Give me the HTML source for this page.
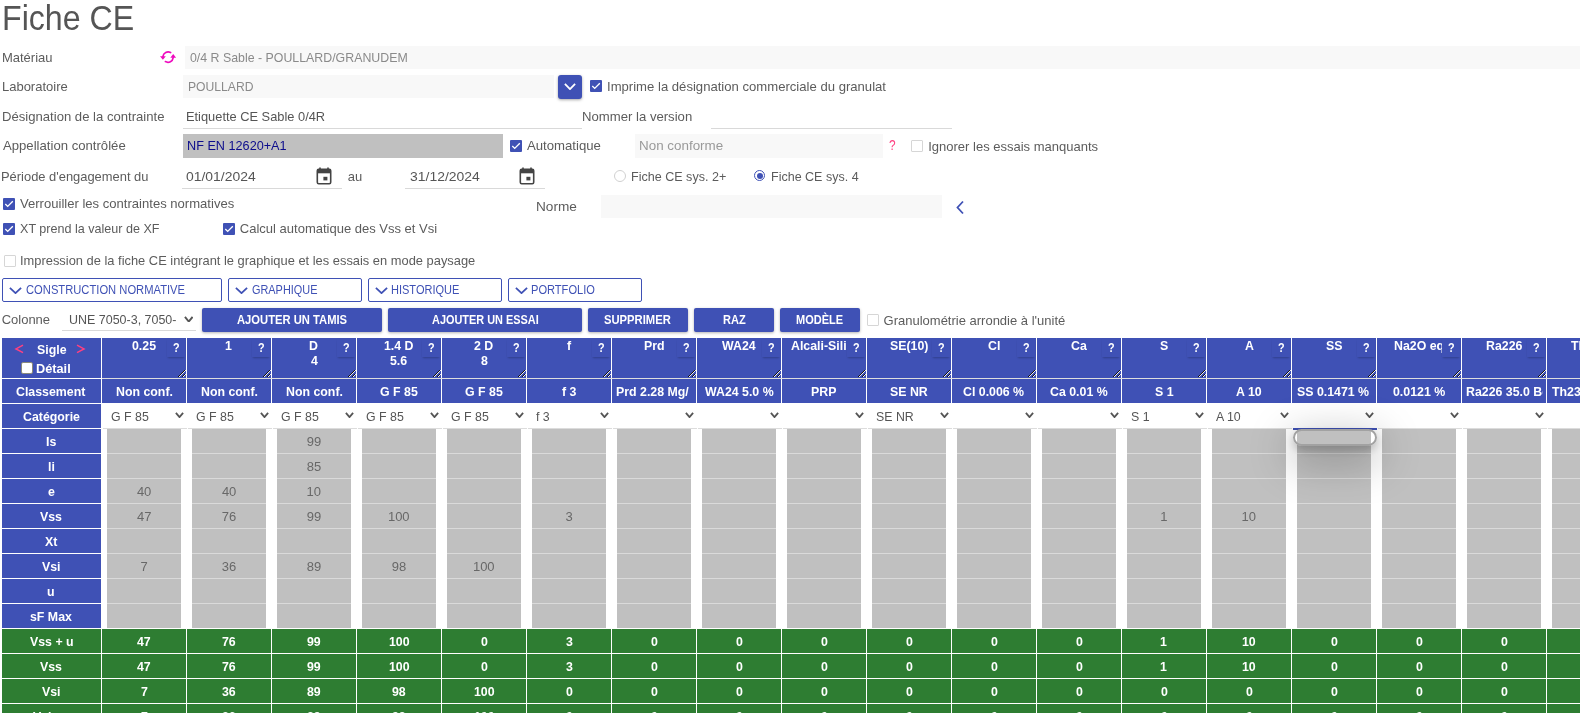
<!DOCTYPE html>
<html><head><meta charset="utf-8"><style>
html,body{margin:0;padding:0;width:1580px;height:713px;overflow:hidden;background:#fff}
body{position:relative;font-family:"Liberation Sans",sans-serif}
#w{position:absolute;left:0;top:0;width:1580px;height:713px;overflow:hidden;will-change:transform}
.t{position:absolute;white-space:nowrap}
.r{position:absolute;box-sizing:content-box}
</style></head><body><div id="w">
<div class="t" style="left:1.63px;top:1.00px;font-size:34.5px;line-height:34.5px;color:#555;transform:scaleX(0.9320);transform-origin:0 0;">Fiche CE</div>
<div class="t" style="left:1.96px;top:51.00px;font-size:13px;line-height:13px;color:#5c5c5c;">Matériau</div>
<svg class="r" style="left:156px;top:46px" width="24" height="22" viewBox="0 0 24 22"><g fill="none" stroke="#ee0abe" stroke-width="1.7" stroke-linecap="round"><path d="M14.6 6.6 A5.3 5.3 0 0 0 6.9 10.6"/><path d="M9.4 15.6 A5.3 5.3 0 0 0 17.2 11.6"/></g><g fill="#ee0abe"><path d="M4.0 10.3 L9.8 10.3 L6.9 13.8 Z"/><path d="M14.3 11.7 L20.1 11.7 L17.2 8.1 Z"/></g></svg>
<div class="r" style="left:185px;top:46px;width:1395px;height:23px;background:#f8f8f8"></div>
<div class="t" style="left:189.91px;top:51.00px;font-size:13px;line-height:13px;color:#8a8a8a;transform:scaleX(0.9506);transform-origin:0 0;">0/4 R Sable - POULLARD/GRANUDEM</div>
<div class="t" style="left:1.96px;top:80.00px;font-size:13px;line-height:13px;color:#5c5c5c;">Laboratoire</div>
<div class="r" style="left:183px;top:75px;width:371px;height:23px;background:#f8f8f8"></div>
<div class="t" style="left:187.53px;top:80.00px;font-size:13px;line-height:13px;color:#8a8a8a;transform:scaleX(0.9351);transform-origin:0 0;">POULLARD</div>
<div class="r" style="left:558px;top:75px;width:24px;height:24px;background:#3f51b5;border-radius:3px;box-shadow:0 1px 3px rgba(0,0,0,.35)"></div>
<svg class="r" style="left:564px;top:83px" width="12" height="7" viewBox="0 0 12 7"><path d="M0.9 0.9 L6.0 6.1 L11.1 0.9" fill="none" stroke="#fff" stroke-width="1.8"/></svg>
<div class="r" style="left:590px;top:80px;width:12px;height:12px;background:#3f51b5;border-radius:1px"><svg width="12" height="12" viewBox="0 0 12 12" style="position:absolute;left:0;top:0"><path d="M2.3 6.1 L4.7 8.4 L9.8 3.3" fill="none" stroke="#fff" stroke-width="1.35"/></svg></div>
<div class="t" style="left:606.62px;top:80.00px;font-size:13px;line-height:13px;color:#5c5c5c;transform:scaleX(1.0081);transform-origin:0 0;">Imprime la désignation commerciale du granulat</div>
<div class="t" style="left:2.15px;top:110.00px;font-size:13px;line-height:13px;color:#5c5c5c;transform:scaleX(1.0081);transform-origin:0 0;">Désignation de la contrainte</div>
<div class="r" style="left:183px;top:128px;width:399px;height:1px;background:#d9d9d9"></div>
<div class="t" style="left:186.47px;top:109.50px;font-size:13px;line-height:13px;color:#555;transform:scaleX(0.9871);transform-origin:0 0;">Etiquette CE Sable 0/4R</div>
<div class="t" style="left:582.45px;top:109.50px;font-size:13px;line-height:13px;color:#5c5c5c;transform:scaleX(1.0104);transform-origin:0 0;">Nommer la version</div>
<div class="r" style="left:711px;top:128px;width:241px;height:1px;background:#d9d9d9"></div>
<div class="t" style="left:3.20px;top:139.00px;font-size:13px;line-height:13px;color:#5c5c5c;transform:scaleX(1.0105);transform-origin:0 0;">Appellation contrôlée</div>
<div class="r" style="left:183px;top:134px;width:320px;height:24px;background:#c0c0c0"></div>
<div class="t" style="left:186.79px;top:139.30px;font-size:13px;line-height:13px;color:#0c0c8c;transform:scaleX(0.9740);transform-origin:0 0;">NF EN 12620+A1</div>
<div class="r" style="left:510px;top:140px;width:12px;height:12px;background:#3f51b5;border-radius:1px"><svg width="12" height="12" viewBox="0 0 12 12" style="position:absolute;left:0;top:0"><path d="M2.3 6.1 L4.7 8.4 L9.8 3.3" fill="none" stroke="#fff" stroke-width="1.35"/></svg></div>
<div class="t" style="left:527.30px;top:139.00px;font-size:13px;line-height:13px;color:#5c5c5c;transform:scaleX(1.0123);transform-origin:0 0;">Automatique</div>
<div class="r" style="left:635px;top:134px;width:248px;height:24px;background:#f8f8f8"></div>
<div class="t" style="left:639.43px;top:139.00px;font-size:13px;line-height:13px;color:#9a9a9a;transform:scaleX(1.0311);transform-origin:0 0;">Non conforme</div>
<div class="t" style="left:888.82px;top:138.00px;font-size:14px;line-height:14px;color:#ff4081;transform:scaleX(0.8500);transform-origin:0 0;">?</div>
<div class="r" style="left:911px;top:140px;width:10px;height:10px;border:1px solid #d6d6d6;border-radius:1px;background:#fff"></div>
<div class="t" style="left:928.23px;top:139.50px;font-size:13px;line-height:13px;color:#5c5c5c;">Ignorer les essais manquants</div>
<div class="t" style="left:1.47px;top:169.50px;font-size:13px;line-height:13px;color:#5c5c5c;transform:scaleX(0.9927);transform-origin:0 0;">Période d&#x27;engagement du</div>
<div class="t" style="left:186.44px;top:170.00px;font-size:13px;line-height:13px;color:#555;transform:scaleX(1.0708);transform-origin:0 0;">01/01/2024</div>
<div class="r" style="left:182px;top:188px;width:160px;height:1px;background:#d9d9d9"></div>
<svg class="r" style="left:316px;top:167px" width="16" height="18" viewBox="0 0 16 18"><path d="M4 0.5 V3 M12 0.5 V3" stroke="#444" stroke-width="1.6"/><rect x="1.3" y="2.3" width="13.4" height="14.4" rx="1.4" fill="none" stroke="#444" stroke-width="1.6"/><rect x="1.3" y="2.3" width="13.4" height="4" fill="#444"/><rect x="7.4" y="9.8" width="4" height="3.6" fill="#444"/></svg>
<div class="t" style="left:347.68px;top:169.50px;font-size:13px;line-height:13px;color:#5c5c5c;">au</div>
<div class="t" style="left:409.64px;top:170.00px;font-size:13px;line-height:13px;color:#555;transform:scaleX(1.0724);transform-origin:0 0;">31/12/2024</div>
<div class="r" style="left:405px;top:188px;width:140px;height:1px;background:#d9d9d9"></div>
<svg class="r" style="left:519px;top:167px" width="16" height="18" viewBox="0 0 16 18"><path d="M4 0.5 V3 M12 0.5 V3" stroke="#444" stroke-width="1.6"/><rect x="1.3" y="2.3" width="13.4" height="14.4" rx="1.4" fill="none" stroke="#444" stroke-width="1.6"/><rect x="1.3" y="2.3" width="13.4" height="4" fill="#444"/><rect x="7.4" y="9.8" width="4" height="3.6" fill="#444"/></svg>
<div class="r" style="left:614px;top:170px;width:10px;height:10px;border:1px solid #d0d0d0;border-radius:50%"></div>
<div class="t" style="left:631.00px;top:170.20px;font-size:13px;line-height:13px;color:#5c5c5c;transform:scaleX(0.9658);transform-origin:0 0;">Fiche CE sys. 2+</div>
<div class="r" style="left:754px;top:170px;width:9px;height:9px;border:1.5px solid #3f51b5;border-radius:50%"></div>
<div class="r" style="left:756.8px;top:172.8px;width:6.4px;height:6.4px;background:#3f51b5;border-radius:50%"></div>
<div class="t" style="left:770.60px;top:170.20px;font-size:13px;line-height:13px;color:#5c5c5c;transform:scaleX(0.9624);transform-origin:0 0;">Fiche CE sys. 4</div>
<div class="r" style="left:3px;top:198px;width:12px;height:12px;background:#3f51b5;border-radius:1px"><svg width="12" height="12" viewBox="0 0 12 12" style="position:absolute;left:0;top:0"><path d="M2.3 6.1 L4.7 8.4 L9.8 3.3" fill="none" stroke="#fff" stroke-width="1.35"/></svg></div>
<div class="t" style="left:20.23px;top:196.70px;font-size:13px;line-height:13px;color:#5c5c5c;transform:scaleX(1.0051);transform-origin:0 0;">Verrouiller les contraintes normatives</div>
<div class="t" style="left:535.71px;top:199.50px;font-size:13px;line-height:13px;color:#5c5c5c;transform:scaleX(1.0488);transform-origin:0 0;">Norme</div>
<div class="r" style="left:601px;top:195px;width:341px;height:23px;background:#f8f8f8"></div>
<svg class="r" style="left:954px;top:200px" width="12" height="15" viewBox="0 0 12 15"><path d="M9 1.5 L3.5 7.5 L9 13.5" fill="none" stroke="#3f51b5" stroke-width="1.8"/></svg>
<div class="r" style="left:3px;top:223px;width:12px;height:12px;background:#3f51b5;border-radius:1px"><svg width="12" height="12" viewBox="0 0 12 12" style="position:absolute;left:0;top:0"><path d="M2.3 6.1 L4.7 8.4 L9.8 3.3" fill="none" stroke="#fff" stroke-width="1.35"/></svg></div>
<div class="t" style="left:19.99px;top:222.00px;font-size:13px;line-height:13px;color:#5c5c5c;transform:scaleX(0.9669);transform-origin:0 0;">XT prend la valeur de XF</div>
<div class="r" style="left:223px;top:223px;width:12px;height:12px;background:#3f51b5;border-radius:1px"><svg width="12" height="12" viewBox="0 0 12 12" style="position:absolute;left:0;top:0"><path d="M2.3 6.1 L4.7 8.4 L9.8 3.3" fill="none" stroke="#fff" stroke-width="1.35"/></svg></div>
<div class="t" style="left:239.85px;top:221.70px;font-size:13px;line-height:13px;color:#5c5c5c;">Calcul automatique des Vss et Vsi</div>
<div class="r" style="left:4px;top:255px;width:10px;height:10px;border:1px solid #d6d6d6;border-radius:1px;background:#fff"></div>
<div class="t" style="left:20.04px;top:254.00px;font-size:13px;line-height:13px;color:#5c5c5c;transform:scaleX(0.9905);transform-origin:0 0;">Impression de la fiche CE intégrant le graphique et les essais en mode paysage</div>
<div class="r" style="left:2px;top:278px;width:218px;height:22px;border:1px solid #3f51b5;border-radius:2px"></div>
<svg class="r" style="left:8.6px;top:286.8px" width="13" height="7" viewBox="0 0 13 7"><path d="M0.9 0.9 L6.5 6.1 L12.1 0.9" fill="none" stroke="#3f51b5" stroke-width="1.8"/></svg>
<div class="t" style="left:26.04px;top:284.00px;font-size:12px;line-height:12px;color:#3f51b5;transform:scaleX(0.9331);transform-origin:0 0;">CONSTRUCTION NORMATIVE</div>
<div class="r" style="left:228px;top:278px;width:132px;height:22px;border:1px solid #3f51b5;border-radius:2px"></div>
<svg class="r" style="left:234.6px;top:286.8px" width="13" height="7" viewBox="0 0 13 7"><path d="M0.9 0.9 L6.5 6.1 L12.1 0.9" fill="none" stroke="#3f51b5" stroke-width="1.8"/></svg>
<div class="t" style="left:252.06px;top:284.00px;font-size:12px;line-height:12px;color:#3f51b5;transform:scaleX(0.9081);transform-origin:0 0;">GRAPHIQUE</div>
<div class="r" style="left:368px;top:278px;width:132px;height:22px;border:1px solid #3f51b5;border-radius:2px"></div>
<svg class="r" style="left:374.6px;top:286.8px" width="13" height="7" viewBox="0 0 13 7"><path d="M0.9 0.9 L6.5 6.1 L12.1 0.9" fill="none" stroke="#3f51b5" stroke-width="1.8"/></svg>
<div class="t" style="left:391.12px;top:284.00px;font-size:12px;line-height:12px;color:#3f51b5;transform:scaleX(0.9176);transform-origin:0 0;">HISTORIQUE</div>
<div class="r" style="left:508px;top:278px;width:132px;height:22px;border:1px solid #3f51b5;border-radius:2px"></div>
<svg class="r" style="left:514.6px;top:286.8px" width="13" height="7" viewBox="0 0 13 7"><path d="M0.9 0.9 L6.5 6.1 L12.1 0.9" fill="none" stroke="#3f51b5" stroke-width="1.8"/></svg>
<div class="t" style="left:531.11px;top:284.00px;font-size:12px;line-height:12px;color:#3f51b5;transform:scaleX(0.9243);transform-origin:0 0;">PORTFOLIO</div>
<div class="t" style="left:1.65px;top:313.00px;font-size:13px;line-height:13px;color:#5c5c5c;">Colonne</div>
<div class="r" style="left:62px;top:330px;width:134px;height:1px;background:#d9d9d9"></div>
<div class="t" style="left:69.26px;top:313.00px;font-size:13px;line-height:13px;color:#555;transform:scaleX(0.9593);transform-origin:0 0;">UNE 7050-3, 7050-</div>
<svg class="r" style="left:183.5px;top:315.8px" width="9.5" height="6.5" viewBox="0 0 9.5 6.5"><path d="M0.95 0.95 L4.75 5.55 L8.55 0.95" fill="none" stroke="#555" stroke-width="1.9"/></svg>
<div class="r" style="left:202px;top:308px;width:180px;height:24px;background:#3f51b5;border-radius:2px;box-shadow:0 1px 3px rgba(0,0,0,.3)"></div>
<div class="t" style="left:236.72px;top:314.00px;font-size:12px;line-height:12px;color:#fff;font-weight:bold;transform:scaleX(0.9346);transform-origin:0 0;">AJOUTER UN TAMIS</div>
<div class="r" style="left:388px;top:308px;width:194px;height:24px;background:#3f51b5;border-radius:2px;box-shadow:0 1px 3px rgba(0,0,0,.3)"></div>
<div class="t" style="left:431.73px;top:314.00px;font-size:12px;line-height:12px;color:#fff;font-weight:bold;transform:scaleX(0.9095);transform-origin:0 0;">AJOUTER UN ESSAI</div>
<div class="r" style="left:588px;top:308px;width:100px;height:24px;background:#3f51b5;border-radius:2px;box-shadow:0 1px 3px rgba(0,0,0,.3)"></div>
<div class="t" style="left:604.46px;top:314.00px;font-size:12px;line-height:12px;color:#fff;font-weight:bold;transform:scaleX(0.9358);transform-origin:0 0;">SUPPRIMER</div>
<div class="r" style="left:694px;top:308px;width:80px;height:24px;background:#3f51b5;border-radius:2px;box-shadow:0 1px 3px rgba(0,0,0,.3)"></div>
<div class="t" style="left:722.58px;top:314.00px;font-size:12px;line-height:12px;color:#fff;font-weight:bold;transform:scaleX(0.9203);transform-origin:0 0;">RAZ</div>
<div class="r" style="left:780px;top:308px;width:80px;height:24px;background:#3f51b5;border-radius:2px;box-shadow:0 1px 3px rgba(0,0,0,.3)"></div>
<div class="t" style="left:796.28px;top:314.00px;font-size:12px;line-height:12px;color:#fff;font-weight:bold;transform:scaleX(0.9182);transform-origin:0 0;">MODÈLE</div>
<div class="r" style="left:867px;top:314px;width:10px;height:10px;border:1px solid #d6d6d6;border-radius:1px;background:#fff"></div>
<div class="t" style="left:883.55px;top:313.50px;font-size:13px;line-height:13px;color:#5c5c5c;">Granulométrie arrondie à l&#x27;unité</div>
<div class="r" style="left:2px;top:338px;width:99px;height:40px;background:#3f51b5"></div>
<div class="r" style="left:2px;top:379px;width:99px;height:24px;background:#3f51b5"></div>
<div class="r" style="left:2px;top:404px;width:99px;height:24px;background:#3f51b5"></div>
<div class="r" style="left:2px;top:429px;width:99px;height:24px;background:#3f51b5"></div>
<div class="t" style="left:45.69px;top:435.00px;font-size:13px;line-height:13px;color:#fff;font-weight:bold;transform:scaleX(0.9500);transform-origin:0 0;">Is</div>
<div class="r" style="left:2px;top:454px;width:99px;height:24px;background:#3f51b5"></div>
<div class="t" style="left:47.54px;top:460.00px;font-size:13px;line-height:13px;color:#fff;font-weight:bold;transform:scaleX(0.9500);transform-origin:0 0;">li</div>
<div class="r" style="left:2px;top:479px;width:99px;height:24px;background:#3f51b5"></div>
<div class="t" style="left:47.54px;top:485.00px;font-size:13px;line-height:13px;color:#fff;font-weight:bold;transform:scaleX(0.9500);transform-origin:0 0;">e</div>
<div class="r" style="left:2px;top:504px;width:99px;height:24px;background:#3f51b5"></div>
<div class="t" style="left:40.22px;top:510.00px;font-size:13px;line-height:13px;color:#fff;font-weight:bold;transform:scaleX(0.9500);transform-origin:0 0;">Vss</div>
<div class="r" style="left:2px;top:529px;width:99px;height:24px;background:#3f51b5"></div>
<div class="t" style="left:44.86px;top:535.00px;font-size:13px;line-height:13px;color:#fff;font-weight:bold;transform:scaleX(0.9500);transform-origin:0 0;">Xt</div>
<div class="r" style="left:2px;top:554px;width:99px;height:24px;background:#3f51b5"></div>
<div class="t" style="left:42.11px;top:560.00px;font-size:13px;line-height:13px;color:#fff;font-weight:bold;transform:scaleX(0.9500);transform-origin:0 0;">Vsi</div>
<div class="r" style="left:2px;top:579px;width:99px;height:24px;background:#3f51b5"></div>
<div class="t" style="left:47.26px;top:585.00px;font-size:13px;line-height:13px;color:#fff;font-weight:bold;transform:scaleX(0.9500);transform-origin:0 0;">u</div>
<div class="r" style="left:2px;top:604px;width:99px;height:24px;background:#3f51b5"></div>
<div class="t" style="left:29.88px;top:610.00px;font-size:13px;line-height:13px;color:#fff;font-weight:bold;transform:scaleX(0.9500);transform-origin:0 0;">sF Max</div>
<div class="r" style="left:2px;top:629px;width:99px;height:24px;background:#2e7d32"></div>
<div class="t" style="left:29.57px;top:635.00px;font-size:13px;line-height:13px;color:#fff;font-weight:bold;transform:scaleX(0.9500);transform-origin:0 0;">Vss + u</div>
<div class="r" style="left:2px;top:654px;width:99px;height:24px;background:#2e7d32"></div>
<div class="t" style="left:40.22px;top:660.00px;font-size:13px;line-height:13px;color:#fff;font-weight:bold;transform:scaleX(0.9500);transform-origin:0 0;">Vss</div>
<div class="r" style="left:2px;top:679px;width:99px;height:24px;background:#2e7d32"></div>
<div class="t" style="left:42.11px;top:685.00px;font-size:13px;line-height:13px;color:#fff;font-weight:bold;transform:scaleX(0.9500);transform-origin:0 0;">Vsi</div>
<div class="r" style="left:2px;top:704px;width:99px;height:24px;background:#2e7d32"></div>
<div class="t" style="left:32.85px;top:710.00px;font-size:13px;line-height:13px;color:#fff;font-weight:bold;transform:scaleX(0.9500);transform-origin:0 0;">Vsi - u</div>
<div class="t" style="left:36.77px;top:342.60px;font-size:13px;line-height:13px;color:#fff;font-weight:bold;transform:scaleX(0.9500);transform-origin:0 0;">Sigle</div>
<svg class="r" style="left:14px;top:344px" width="10" height="10" viewBox="0 0 10 10"><path d="M9 1.2 L2 4.9 L9 8.6" fill="none" stroke="#ff4081" stroke-width="1.5"/></svg>
<svg class="r" style="left:76px;top:344px" width="10" height="10" viewBox="0 0 10 10"><path d="M1 1.2 L8 4.9 L1 8.6" fill="none" stroke="#ff4081" stroke-width="1.5"/></svg>
<div class="r" style="left:21px;top:362px;width:10px;height:10px;background:#fff;border:1px solid #8a8a7a;border-radius:2px"></div>
<div class="t" style="left:36.17px;top:362.00px;font-size:13px;line-height:13px;color:#fff;font-weight:bold;transform:scaleX(0.9800);transform-origin:0 0;">Détail</div>
<div class="t" style="left:16.17px;top:384.50px;font-size:13px;line-height:13px;color:#fff;font-weight:bold;transform:scaleX(0.9500);transform-origin:0 0;">Classement</div>
<div class="t" style="left:22.50px;top:410.00px;font-size:13px;line-height:13px;color:#fff;font-weight:bold;transform:scaleX(0.9500);transform-origin:0 0;">Catégorie</div>
<div class="r" style="left:102px;top:338px;width:84px;height:40px;background:#3f51b5"></div>
<div class="r" style="left:102px;top:338px;width:65px;height:40px;overflow:hidden">
<div class="t" style="left:29.90px;top:1.00px;font-size:13px;line-height:13px;color:#fff;font-weight:bold;transform:scaleX(0.9500);transform-origin:0 0;">0.25</div>
</div>
<div class="r" style="left:167px;top:339px;width:18px;height:18px;background:#3f51b5;box-shadow:0 2px 2px -1px rgba(0,0,0,.22),0 0 1px rgba(0,0,0,.06)"></div>
<div class="t" style="left:172.96px;top:342.00px;font-size:12px;line-height:12px;color:#fff;font-weight:bold;transform:scaleX(0.9000);transform-origin:0 0;">?</div>
<svg class="r" style="left:178px;top:370px" width="8" height="7" viewBox="0 0 8 7" shape-rendering="crispEdges"><rect x="0" y="6" width="1" height="1" fill="#111"/><rect x="1" y="6" width="1" height="1" fill="#e8e8f0"/><rect x="1" y="5" width="1" height="1" fill="#111"/><rect x="2" y="5" width="1" height="1" fill="#e8e8f0"/><rect x="2" y="4" width="1" height="1" fill="#111"/><rect x="3" y="4" width="1" height="1" fill="#e8e8f0"/><rect x="3" y="3" width="1" height="1" fill="#111"/><rect x="4" y="3" width="1" height="1" fill="#e8e8f0"/><rect x="4" y="2" width="1" height="1" fill="#111"/><rect x="5" y="2" width="1" height="1" fill="#e8e8f0"/><rect x="5" y="1" width="1" height="1" fill="#111"/><rect x="6" y="1" width="1" height="1" fill="#e8e8f0"/><rect x="6" y="0" width="1" height="1" fill="#111"/><rect x="7" y="0" width="1" height="1" fill="#e8e8f0"/><rect x="4" y="6" width="1" height="1" fill="#111"/><rect x="5" y="6" width="1" height="1" fill="#e8e8f0"/><rect x="5" y="5" width="1" height="1" fill="#111"/><rect x="6" y="5" width="1" height="1" fill="#e8e8f0"/><rect x="6" y="4" width="1" height="1" fill="#111"/><rect x="7" y="4" width="1" height="1" fill="#e8e8f0"/></svg>
<div class="r" style="left:102px;top:379px;width:84px;height:24px;background:#3f51b5"></div>
<div class="r" style="left:105px;top:379px;width:78px;height:24px;overflow:hidden">
<div class="t" style="left:10.53px;top:5.50px;font-size:13px;line-height:13px;color:#fff;font-weight:bold;transform:scaleX(0.9500);transform-origin:0 0;">Non conf.</div>
</div>
<div class="r" style="left:103px;top:428px;width:84px;height:1px;background:#dcdcdc"></div>
<div class="t" style="left:110.78px;top:410.00px;font-size:13px;line-height:13px;color:#555;transform:scaleX(0.9500);transform-origin:0 0;">G F 85</div>
<svg class="r" style="left:174.5px;top:412.3px" width="9" height="6" viewBox="0 0 9 6"><path d="M0.9 0.9 L4.5 5.1 L8.1 0.9" fill="none" stroke="#555" stroke-width="1.8"/></svg>
<div class="r" style="left:107px;top:429px;width:74px;height:199px;background:#c0c0c0"></div>
<div class="r" style="left:107px;top:453px;width:74px;height:1px;background:#dadada"></div>
<div class="r" style="left:107px;top:478px;width:74px;height:1px;background:#dadada"></div>
<div class="r" style="left:107px;top:503px;width:74px;height:1px;background:#dadada"></div>
<div class="r" style="left:107px;top:528px;width:74px;height:1px;background:#dadada"></div>
<div class="r" style="left:107px;top:553px;width:74px;height:1px;background:#dadada"></div>
<div class="r" style="left:107px;top:578px;width:74px;height:1px;background:#dadada"></div>
<div class="r" style="left:107px;top:603px;width:74px;height:1px;background:#dadada"></div>
<div class="t" style="left:136.88px;top:485.00px;font-size:13px;line-height:13px;color:#686868;">40</div>
<div class="t" style="left:136.98px;top:510.00px;font-size:13px;line-height:13px;color:#686868;">47</div>
<div class="t" style="left:140.39px;top:560.00px;font-size:13px;line-height:13px;color:#686868;">7</div>
<div class="r" style="left:102px;top:629px;width:84px;height:24px;background:#2e7d32"></div>
<div class="t" style="left:137.30px;top:635.00px;font-size:13px;line-height:13px;color:#fff;font-weight:bold;transform:scaleX(0.9500);transform-origin:0 0;">47</div>
<div class="r" style="left:102px;top:654px;width:84px;height:24px;background:#2e7d32"></div>
<div class="t" style="left:137.30px;top:660.00px;font-size:13px;line-height:13px;color:#fff;font-weight:bold;transform:scaleX(0.9500);transform-origin:0 0;">47</div>
<div class="r" style="left:102px;top:679px;width:84px;height:24px;background:#2e7d32"></div>
<div class="t" style="left:140.57px;top:685.00px;font-size:13px;line-height:13px;color:#fff;font-weight:bold;transform:scaleX(0.9500);transform-origin:0 0;">7</div>
<div class="r" style="left:102px;top:704px;width:84px;height:24px;background:#2e7d32"></div>
<div class="t" style="left:140.57px;top:710.00px;font-size:13px;line-height:13px;color:#fff;font-weight:bold;transform:scaleX(0.9500);transform-origin:0 0;">7</div>
<div class="r" style="left:187px;top:338px;width:84px;height:40px;background:#3f51b5"></div>
<div class="r" style="left:187px;top:338px;width:65px;height:40px;overflow:hidden">
<div class="t" style="left:38.36px;top:1.00px;font-size:13px;line-height:13px;color:#fff;font-weight:bold;transform:scaleX(0.9500);transform-origin:0 0;">1</div>
</div>
<div class="r" style="left:252px;top:339px;width:18px;height:18px;background:#3f51b5;box-shadow:0 2px 2px -1px rgba(0,0,0,.22),0 0 1px rgba(0,0,0,.06)"></div>
<div class="t" style="left:257.96px;top:342.00px;font-size:12px;line-height:12px;color:#fff;font-weight:bold;transform:scaleX(0.9000);transform-origin:0 0;">?</div>
<svg class="r" style="left:263px;top:370px" width="8" height="7" viewBox="0 0 8 7" shape-rendering="crispEdges"><rect x="0" y="6" width="1" height="1" fill="#111"/><rect x="1" y="6" width="1" height="1" fill="#e8e8f0"/><rect x="1" y="5" width="1" height="1" fill="#111"/><rect x="2" y="5" width="1" height="1" fill="#e8e8f0"/><rect x="2" y="4" width="1" height="1" fill="#111"/><rect x="3" y="4" width="1" height="1" fill="#e8e8f0"/><rect x="3" y="3" width="1" height="1" fill="#111"/><rect x="4" y="3" width="1" height="1" fill="#e8e8f0"/><rect x="4" y="2" width="1" height="1" fill="#111"/><rect x="5" y="2" width="1" height="1" fill="#e8e8f0"/><rect x="5" y="1" width="1" height="1" fill="#111"/><rect x="6" y="1" width="1" height="1" fill="#e8e8f0"/><rect x="6" y="0" width="1" height="1" fill="#111"/><rect x="7" y="0" width="1" height="1" fill="#e8e8f0"/><rect x="4" y="6" width="1" height="1" fill="#111"/><rect x="5" y="6" width="1" height="1" fill="#e8e8f0"/><rect x="5" y="5" width="1" height="1" fill="#111"/><rect x="6" y="5" width="1" height="1" fill="#e8e8f0"/><rect x="6" y="4" width="1" height="1" fill="#111"/><rect x="7" y="4" width="1" height="1" fill="#e8e8f0"/></svg>
<div class="r" style="left:187px;top:379px;width:84px;height:24px;background:#3f51b5"></div>
<div class="r" style="left:190px;top:379px;width:78px;height:24px;overflow:hidden">
<div class="t" style="left:10.53px;top:5.50px;font-size:13px;line-height:13px;color:#fff;font-weight:bold;transform:scaleX(0.9500);transform-origin:0 0;">Non conf.</div>
</div>
<div class="r" style="left:188px;top:428px;width:84px;height:1px;background:#dcdcdc"></div>
<div class="t" style="left:195.78px;top:410.00px;font-size:13px;line-height:13px;color:#555;transform:scaleX(0.9500);transform-origin:0 0;">G F 85</div>
<svg class="r" style="left:259.5px;top:412.3px" width="9" height="6" viewBox="0 0 9 6"><path d="M0.9 0.9 L4.5 5.1 L8.1 0.9" fill="none" stroke="#555" stroke-width="1.8"/></svg>
<div class="r" style="left:192px;top:429px;width:74px;height:199px;background:#c0c0c0"></div>
<div class="r" style="left:192px;top:453px;width:74px;height:1px;background:#dadada"></div>
<div class="r" style="left:192px;top:478px;width:74px;height:1px;background:#dadada"></div>
<div class="r" style="left:192px;top:503px;width:74px;height:1px;background:#dadada"></div>
<div class="r" style="left:192px;top:528px;width:74px;height:1px;background:#dadada"></div>
<div class="r" style="left:192px;top:553px;width:74px;height:1px;background:#dadada"></div>
<div class="r" style="left:192px;top:578px;width:74px;height:1px;background:#dadada"></div>
<div class="r" style="left:192px;top:603px;width:74px;height:1px;background:#dadada"></div>
<div class="t" style="left:221.88px;top:485.00px;font-size:13px;line-height:13px;color:#686868;">40</div>
<div class="t" style="left:221.72px;top:510.00px;font-size:13px;line-height:13px;color:#686868;">76</div>
<div class="t" style="left:221.78px;top:560.00px;font-size:13px;line-height:13px;color:#686868;">36</div>
<div class="r" style="left:187px;top:629px;width:84px;height:24px;background:#2e7d32"></div>
<div class="t" style="left:222.11px;top:635.00px;font-size:13px;line-height:13px;color:#fff;font-weight:bold;transform:scaleX(0.9500);transform-origin:0 0;">76</div>
<div class="r" style="left:187px;top:654px;width:84px;height:24px;background:#2e7d32"></div>
<div class="t" style="left:222.11px;top:660.00px;font-size:13px;line-height:13px;color:#fff;font-weight:bold;transform:scaleX(0.9500);transform-origin:0 0;">76</div>
<div class="r" style="left:187px;top:679px;width:84px;height:24px;background:#2e7d32"></div>
<div class="t" style="left:222.21px;top:685.00px;font-size:13px;line-height:13px;color:#fff;font-weight:bold;transform:scaleX(0.9500);transform-origin:0 0;">36</div>
<div class="r" style="left:187px;top:704px;width:84px;height:24px;background:#2e7d32"></div>
<div class="t" style="left:222.21px;top:710.00px;font-size:13px;line-height:13px;color:#fff;font-weight:bold;transform:scaleX(0.9500);transform-origin:0 0;">36</div>
<div class="r" style="left:272px;top:338px;width:84px;height:40px;background:#3f51b5"></div>
<div class="r" style="left:272px;top:338px;width:65px;height:40px;overflow:hidden">
<div class="t" style="left:37.40px;top:1.00px;font-size:13px;line-height:13px;color:#fff;font-weight:bold;transform:scaleX(0.9500);transform-origin:0 0;">D</div>
<div class="t" style="left:38.51px;top:16.00px;font-size:13px;line-height:13px;color:#fff;font-weight:bold;transform:scaleX(0.9500);transform-origin:0 0;">4</div>
</div>
<div class="r" style="left:337px;top:339px;width:18px;height:18px;background:#3f51b5;box-shadow:0 2px 2px -1px rgba(0,0,0,.22),0 0 1px rgba(0,0,0,.06)"></div>
<div class="t" style="left:342.96px;top:342.00px;font-size:12px;line-height:12px;color:#fff;font-weight:bold;transform:scaleX(0.9000);transform-origin:0 0;">?</div>
<svg class="r" style="left:348px;top:370px" width="8" height="7" viewBox="0 0 8 7" shape-rendering="crispEdges"><rect x="0" y="6" width="1" height="1" fill="#111"/><rect x="1" y="6" width="1" height="1" fill="#e8e8f0"/><rect x="1" y="5" width="1" height="1" fill="#111"/><rect x="2" y="5" width="1" height="1" fill="#e8e8f0"/><rect x="2" y="4" width="1" height="1" fill="#111"/><rect x="3" y="4" width="1" height="1" fill="#e8e8f0"/><rect x="3" y="3" width="1" height="1" fill="#111"/><rect x="4" y="3" width="1" height="1" fill="#e8e8f0"/><rect x="4" y="2" width="1" height="1" fill="#111"/><rect x="5" y="2" width="1" height="1" fill="#e8e8f0"/><rect x="5" y="1" width="1" height="1" fill="#111"/><rect x="6" y="1" width="1" height="1" fill="#e8e8f0"/><rect x="6" y="0" width="1" height="1" fill="#111"/><rect x="7" y="0" width="1" height="1" fill="#e8e8f0"/><rect x="4" y="6" width="1" height="1" fill="#111"/><rect x="5" y="6" width="1" height="1" fill="#e8e8f0"/><rect x="5" y="5" width="1" height="1" fill="#111"/><rect x="6" y="5" width="1" height="1" fill="#e8e8f0"/><rect x="6" y="4" width="1" height="1" fill="#111"/><rect x="7" y="4" width="1" height="1" fill="#e8e8f0"/></svg>
<div class="r" style="left:272px;top:379px;width:84px;height:24px;background:#3f51b5"></div>
<div class="r" style="left:275px;top:379px;width:78px;height:24px;overflow:hidden">
<div class="t" style="left:10.53px;top:5.50px;font-size:13px;line-height:13px;color:#fff;font-weight:bold;transform:scaleX(0.9500);transform-origin:0 0;">Non conf.</div>
</div>
<div class="r" style="left:273px;top:428px;width:84px;height:1px;background:#dcdcdc"></div>
<div class="t" style="left:280.78px;top:410.00px;font-size:13px;line-height:13px;color:#555;transform:scaleX(0.9500);transform-origin:0 0;">G F 85</div>
<svg class="r" style="left:344.5px;top:412.3px" width="9" height="6" viewBox="0 0 9 6"><path d="M0.9 0.9 L4.5 5.1 L8.1 0.9" fill="none" stroke="#555" stroke-width="1.8"/></svg>
<div class="r" style="left:277px;top:429px;width:74px;height:199px;background:#c0c0c0"></div>
<div class="r" style="left:277px;top:453px;width:74px;height:1px;background:#dadada"></div>
<div class="r" style="left:277px;top:478px;width:74px;height:1px;background:#dadada"></div>
<div class="r" style="left:277px;top:503px;width:74px;height:1px;background:#dadada"></div>
<div class="r" style="left:277px;top:528px;width:74px;height:1px;background:#dadada"></div>
<div class="r" style="left:277px;top:553px;width:74px;height:1px;background:#dadada"></div>
<div class="r" style="left:277px;top:578px;width:74px;height:1px;background:#dadada"></div>
<div class="r" style="left:277px;top:603px;width:74px;height:1px;background:#dadada"></div>
<div class="t" style="left:306.79px;top:435.00px;font-size:13px;line-height:13px;color:#686868;">99</div>
<div class="t" style="left:306.75px;top:460.00px;font-size:13px;line-height:13px;color:#686868;">85</div>
<div class="t" style="left:306.52px;top:485.00px;font-size:13px;line-height:13px;color:#686868;">10</div>
<div class="t" style="left:306.79px;top:510.00px;font-size:13px;line-height:13px;color:#686868;">99</div>
<div class="t" style="left:306.79px;top:560.00px;font-size:13px;line-height:13px;color:#686868;">89</div>
<div class="r" style="left:272px;top:629px;width:84px;height:24px;background:#2e7d32"></div>
<div class="t" style="left:307.15px;top:635.00px;font-size:13px;line-height:13px;color:#fff;font-weight:bold;transform:scaleX(0.9500);transform-origin:0 0;">99</div>
<div class="r" style="left:272px;top:654px;width:84px;height:24px;background:#2e7d32"></div>
<div class="t" style="left:307.15px;top:660.00px;font-size:13px;line-height:13px;color:#fff;font-weight:bold;transform:scaleX(0.9500);transform-origin:0 0;">99</div>
<div class="r" style="left:272px;top:679px;width:84px;height:24px;background:#2e7d32"></div>
<div class="t" style="left:307.18px;top:685.00px;font-size:13px;line-height:13px;color:#fff;font-weight:bold;transform:scaleX(0.9500);transform-origin:0 0;">89</div>
<div class="r" style="left:272px;top:704px;width:84px;height:24px;background:#2e7d32"></div>
<div class="t" style="left:307.18px;top:710.00px;font-size:13px;line-height:13px;color:#fff;font-weight:bold;transform:scaleX(0.9500);transform-origin:0 0;">89</div>
<div class="r" style="left:357px;top:338px;width:84px;height:40px;background:#3f51b5"></div>
<div class="r" style="left:357px;top:338px;width:65px;height:40px;overflow:hidden">
<div class="t" style="left:27.12px;top:1.00px;font-size:13px;line-height:13px;color:#fff;font-weight:bold;transform:scaleX(0.9500);transform-origin:0 0;">1.4 D</div>
<div class="t" style="left:33.45px;top:16.00px;font-size:13px;line-height:13px;color:#fff;font-weight:bold;transform:scaleX(0.9500);transform-origin:0 0;">5.6</div>
</div>
<div class="r" style="left:422px;top:339px;width:18px;height:18px;background:#3f51b5;box-shadow:0 2px 2px -1px rgba(0,0,0,.22),0 0 1px rgba(0,0,0,.06)"></div>
<div class="t" style="left:427.96px;top:342.00px;font-size:12px;line-height:12px;color:#fff;font-weight:bold;transform:scaleX(0.9000);transform-origin:0 0;">?</div>
<svg class="r" style="left:433px;top:370px" width="8" height="7" viewBox="0 0 8 7" shape-rendering="crispEdges"><rect x="0" y="6" width="1" height="1" fill="#111"/><rect x="1" y="6" width="1" height="1" fill="#e8e8f0"/><rect x="1" y="5" width="1" height="1" fill="#111"/><rect x="2" y="5" width="1" height="1" fill="#e8e8f0"/><rect x="2" y="4" width="1" height="1" fill="#111"/><rect x="3" y="4" width="1" height="1" fill="#e8e8f0"/><rect x="3" y="3" width="1" height="1" fill="#111"/><rect x="4" y="3" width="1" height="1" fill="#e8e8f0"/><rect x="4" y="2" width="1" height="1" fill="#111"/><rect x="5" y="2" width="1" height="1" fill="#e8e8f0"/><rect x="5" y="1" width="1" height="1" fill="#111"/><rect x="6" y="1" width="1" height="1" fill="#e8e8f0"/><rect x="6" y="0" width="1" height="1" fill="#111"/><rect x="7" y="0" width="1" height="1" fill="#e8e8f0"/><rect x="4" y="6" width="1" height="1" fill="#111"/><rect x="5" y="6" width="1" height="1" fill="#e8e8f0"/><rect x="5" y="5" width="1" height="1" fill="#111"/><rect x="6" y="5" width="1" height="1" fill="#e8e8f0"/><rect x="6" y="4" width="1" height="1" fill="#111"/><rect x="7" y="4" width="1" height="1" fill="#e8e8f0"/></svg>
<div class="r" style="left:357px;top:379px;width:84px;height:24px;background:#3f51b5"></div>
<div class="r" style="left:360px;top:379px;width:78px;height:24px;overflow:hidden">
<div class="t" style="left:20.04px;top:5.50px;font-size:13px;line-height:13px;color:#fff;font-weight:bold;transform:scaleX(0.9500);transform-origin:0 0;">G F 85</div>
</div>
<div class="r" style="left:358px;top:428px;width:84px;height:1px;background:#dcdcdc"></div>
<div class="t" style="left:365.78px;top:410.00px;font-size:13px;line-height:13px;color:#555;transform:scaleX(0.9500);transform-origin:0 0;">G F 85</div>
<svg class="r" style="left:429.5px;top:412.3px" width="9" height="6" viewBox="0 0 9 6"><path d="M0.9 0.9 L4.5 5.1 L8.1 0.9" fill="none" stroke="#555" stroke-width="1.8"/></svg>
<div class="r" style="left:362px;top:429px;width:74px;height:199px;background:#c0c0c0"></div>
<div class="r" style="left:362px;top:453px;width:74px;height:1px;background:#dadada"></div>
<div class="r" style="left:362px;top:478px;width:74px;height:1px;background:#dadada"></div>
<div class="r" style="left:362px;top:503px;width:74px;height:1px;background:#dadada"></div>
<div class="r" style="left:362px;top:528px;width:74px;height:1px;background:#dadada"></div>
<div class="r" style="left:362px;top:553px;width:74px;height:1px;background:#dadada"></div>
<div class="r" style="left:362px;top:578px;width:74px;height:1px;background:#dadada"></div>
<div class="r" style="left:362px;top:603px;width:74px;height:1px;background:#dadada"></div>
<div class="t" style="left:387.92px;top:510.00px;font-size:13px;line-height:13px;color:#686868;">100</div>
<div class="t" style="left:391.75px;top:560.00px;font-size:13px;line-height:13px;color:#686868;">98</div>
<div class="r" style="left:357px;top:629px;width:84px;height:24px;background:#2e7d32"></div>
<div class="t" style="left:388.60px;top:635.00px;font-size:13px;line-height:13px;color:#fff;font-weight:bold;transform:scaleX(0.9500);transform-origin:0 0;">100</div>
<div class="r" style="left:357px;top:654px;width:84px;height:24px;background:#2e7d32"></div>
<div class="t" style="left:388.60px;top:660.00px;font-size:13px;line-height:13px;color:#fff;font-weight:bold;transform:scaleX(0.9500);transform-origin:0 0;">100</div>
<div class="r" style="left:357px;top:679px;width:84px;height:24px;background:#2e7d32"></div>
<div class="t" style="left:392.11px;top:685.00px;font-size:13px;line-height:13px;color:#fff;font-weight:bold;transform:scaleX(0.9500);transform-origin:0 0;">98</div>
<div class="r" style="left:357px;top:704px;width:84px;height:24px;background:#2e7d32"></div>
<div class="t" style="left:392.11px;top:710.00px;font-size:13px;line-height:13px;color:#fff;font-weight:bold;transform:scaleX(0.9500);transform-origin:0 0;">98</div>
<div class="r" style="left:442px;top:338px;width:84px;height:40px;background:#3f51b5"></div>
<div class="r" style="left:442px;top:338px;width:65px;height:40px;overflow:hidden">
<div class="t" style="left:32.43px;top:1.00px;font-size:13px;line-height:13px;color:#fff;font-weight:bold;transform:scaleX(0.9500);transform-origin:0 0;">2 D</div>
<div class="t" style="left:38.57px;top:16.00px;font-size:13px;line-height:13px;color:#fff;font-weight:bold;transform:scaleX(0.9500);transform-origin:0 0;">8</div>
</div>
<div class="r" style="left:507px;top:339px;width:18px;height:18px;background:#3f51b5;box-shadow:0 2px 2px -1px rgba(0,0,0,.22),0 0 1px rgba(0,0,0,.06)"></div>
<div class="t" style="left:512.96px;top:342.00px;font-size:12px;line-height:12px;color:#fff;font-weight:bold;transform:scaleX(0.9000);transform-origin:0 0;">?</div>
<svg class="r" style="left:518px;top:370px" width="8" height="7" viewBox="0 0 8 7" shape-rendering="crispEdges"><rect x="0" y="6" width="1" height="1" fill="#111"/><rect x="1" y="6" width="1" height="1" fill="#e8e8f0"/><rect x="1" y="5" width="1" height="1" fill="#111"/><rect x="2" y="5" width="1" height="1" fill="#e8e8f0"/><rect x="2" y="4" width="1" height="1" fill="#111"/><rect x="3" y="4" width="1" height="1" fill="#e8e8f0"/><rect x="3" y="3" width="1" height="1" fill="#111"/><rect x="4" y="3" width="1" height="1" fill="#e8e8f0"/><rect x="4" y="2" width="1" height="1" fill="#111"/><rect x="5" y="2" width="1" height="1" fill="#e8e8f0"/><rect x="5" y="1" width="1" height="1" fill="#111"/><rect x="6" y="1" width="1" height="1" fill="#e8e8f0"/><rect x="6" y="0" width="1" height="1" fill="#111"/><rect x="7" y="0" width="1" height="1" fill="#e8e8f0"/><rect x="4" y="6" width="1" height="1" fill="#111"/><rect x="5" y="6" width="1" height="1" fill="#e8e8f0"/><rect x="5" y="5" width="1" height="1" fill="#111"/><rect x="6" y="5" width="1" height="1" fill="#e8e8f0"/><rect x="6" y="4" width="1" height="1" fill="#111"/><rect x="7" y="4" width="1" height="1" fill="#e8e8f0"/></svg>
<div class="r" style="left:442px;top:379px;width:84px;height:24px;background:#3f51b5"></div>
<div class="r" style="left:445px;top:379px;width:78px;height:24px;overflow:hidden">
<div class="t" style="left:20.04px;top:5.50px;font-size:13px;line-height:13px;color:#fff;font-weight:bold;transform:scaleX(0.9500);transform-origin:0 0;">G F 85</div>
</div>
<div class="r" style="left:443px;top:428px;width:84px;height:1px;background:#dcdcdc"></div>
<div class="t" style="left:450.78px;top:410.00px;font-size:13px;line-height:13px;color:#555;transform:scaleX(0.9500);transform-origin:0 0;">G F 85</div>
<svg class="r" style="left:514.5px;top:412.3px" width="9" height="6" viewBox="0 0 9 6"><path d="M0.9 0.9 L4.5 5.1 L8.1 0.9" fill="none" stroke="#555" stroke-width="1.8"/></svg>
<div class="r" style="left:447px;top:429px;width:74px;height:199px;background:#c0c0c0"></div>
<div class="r" style="left:447px;top:453px;width:74px;height:1px;background:#dadada"></div>
<div class="r" style="left:447px;top:478px;width:74px;height:1px;background:#dadada"></div>
<div class="r" style="left:447px;top:503px;width:74px;height:1px;background:#dadada"></div>
<div class="r" style="left:447px;top:528px;width:74px;height:1px;background:#dadada"></div>
<div class="r" style="left:447px;top:553px;width:74px;height:1px;background:#dadada"></div>
<div class="r" style="left:447px;top:578px;width:74px;height:1px;background:#dadada"></div>
<div class="r" style="left:447px;top:603px;width:74px;height:1px;background:#dadada"></div>
<div class="t" style="left:472.92px;top:560.00px;font-size:13px;line-height:13px;color:#686868;">100</div>
<div class="r" style="left:442px;top:629px;width:84px;height:24px;background:#2e7d32"></div>
<div class="t" style="left:480.57px;top:635.00px;font-size:13px;line-height:13px;color:#fff;font-weight:bold;transform:scaleX(0.9500);transform-origin:0 0;">0</div>
<div class="r" style="left:442px;top:654px;width:84px;height:24px;background:#2e7d32"></div>
<div class="t" style="left:480.57px;top:660.00px;font-size:13px;line-height:13px;color:#fff;font-weight:bold;transform:scaleX(0.9500);transform-origin:0 0;">0</div>
<div class="r" style="left:442px;top:679px;width:84px;height:24px;background:#2e7d32"></div>
<div class="t" style="left:473.60px;top:685.00px;font-size:13px;line-height:13px;color:#fff;font-weight:bold;transform:scaleX(0.9500);transform-origin:0 0;">100</div>
<div class="r" style="left:442px;top:704px;width:84px;height:24px;background:#2e7d32"></div>
<div class="t" style="left:473.60px;top:710.00px;font-size:13px;line-height:13px;color:#fff;font-weight:bold;transform:scaleX(0.9500);transform-origin:0 0;">100</div>
<div class="r" style="left:527px;top:338px;width:84px;height:40px;background:#3f51b5"></div>
<div class="r" style="left:527px;top:338px;width:65px;height:40px;overflow:hidden">
<div class="t" style="left:39.84px;top:1.00px;font-size:13px;line-height:13px;color:#fff;font-weight:bold;transform:scaleX(0.9500);transform-origin:0 0;">f</div>
</div>
<div class="r" style="left:592px;top:339px;width:18px;height:18px;background:#3f51b5;box-shadow:0 2px 2px -1px rgba(0,0,0,.22),0 0 1px rgba(0,0,0,.06)"></div>
<div class="t" style="left:597.96px;top:342.00px;font-size:12px;line-height:12px;color:#fff;font-weight:bold;transform:scaleX(0.9000);transform-origin:0 0;">?</div>
<svg class="r" style="left:603px;top:370px" width="8" height="7" viewBox="0 0 8 7" shape-rendering="crispEdges"><rect x="0" y="6" width="1" height="1" fill="#111"/><rect x="1" y="6" width="1" height="1" fill="#e8e8f0"/><rect x="1" y="5" width="1" height="1" fill="#111"/><rect x="2" y="5" width="1" height="1" fill="#e8e8f0"/><rect x="2" y="4" width="1" height="1" fill="#111"/><rect x="3" y="4" width="1" height="1" fill="#e8e8f0"/><rect x="3" y="3" width="1" height="1" fill="#111"/><rect x="4" y="3" width="1" height="1" fill="#e8e8f0"/><rect x="4" y="2" width="1" height="1" fill="#111"/><rect x="5" y="2" width="1" height="1" fill="#e8e8f0"/><rect x="5" y="1" width="1" height="1" fill="#111"/><rect x="6" y="1" width="1" height="1" fill="#e8e8f0"/><rect x="6" y="0" width="1" height="1" fill="#111"/><rect x="7" y="0" width="1" height="1" fill="#e8e8f0"/><rect x="4" y="6" width="1" height="1" fill="#111"/><rect x="5" y="6" width="1" height="1" fill="#e8e8f0"/><rect x="5" y="5" width="1" height="1" fill="#111"/><rect x="6" y="5" width="1" height="1" fill="#e8e8f0"/><rect x="6" y="4" width="1" height="1" fill="#111"/><rect x="7" y="4" width="1" height="1" fill="#e8e8f0"/></svg>
<div class="r" style="left:527px;top:379px;width:84px;height:24px;background:#3f51b5"></div>
<div class="r" style="left:530px;top:379px;width:78px;height:24px;overflow:hidden">
<div class="t" style="left:31.93px;top:5.50px;font-size:13px;line-height:13px;color:#fff;font-weight:bold;transform:scaleX(0.9500);transform-origin:0 0;">f 3</div>
</div>
<div class="r" style="left:528px;top:428px;width:84px;height:1px;background:#dcdcdc"></div>
<div class="t" style="left:536.21px;top:410.00px;font-size:13px;line-height:13px;color:#555;transform:scaleX(0.9500);transform-origin:0 0;">f 3</div>
<svg class="r" style="left:599.5px;top:412.3px" width="9" height="6" viewBox="0 0 9 6"><path d="M0.9 0.9 L4.5 5.1 L8.1 0.9" fill="none" stroke="#555" stroke-width="1.8"/></svg>
<div class="r" style="left:532px;top:429px;width:74px;height:199px;background:#c0c0c0"></div>
<div class="r" style="left:532px;top:453px;width:74px;height:1px;background:#dadada"></div>
<div class="r" style="left:532px;top:478px;width:74px;height:1px;background:#dadada"></div>
<div class="r" style="left:532px;top:503px;width:74px;height:1px;background:#dadada"></div>
<div class="r" style="left:532px;top:528px;width:74px;height:1px;background:#dadada"></div>
<div class="r" style="left:532px;top:553px;width:74px;height:1px;background:#dadada"></div>
<div class="r" style="left:532px;top:578px;width:74px;height:1px;background:#dadada"></div>
<div class="r" style="left:532px;top:603px;width:74px;height:1px;background:#dadada"></div>
<div class="t" style="left:565.39px;top:510.00px;font-size:13px;line-height:13px;color:#686868;">3</div>
<div class="r" style="left:527px;top:629px;width:84px;height:24px;background:#2e7d32"></div>
<div class="t" style="left:565.63px;top:635.00px;font-size:13px;line-height:13px;color:#fff;font-weight:bold;transform:scaleX(0.9500);transform-origin:0 0;">3</div>
<div class="r" style="left:527px;top:654px;width:84px;height:24px;background:#2e7d32"></div>
<div class="t" style="left:565.63px;top:660.00px;font-size:13px;line-height:13px;color:#fff;font-weight:bold;transform:scaleX(0.9500);transform-origin:0 0;">3</div>
<div class="r" style="left:527px;top:679px;width:84px;height:24px;background:#2e7d32"></div>
<div class="t" style="left:565.57px;top:685.00px;font-size:13px;line-height:13px;color:#fff;font-weight:bold;transform:scaleX(0.9500);transform-origin:0 0;">0</div>
<div class="r" style="left:527px;top:704px;width:84px;height:24px;background:#2e7d32"></div>
<div class="t" style="left:565.57px;top:710.00px;font-size:13px;line-height:13px;color:#fff;font-weight:bold;transform:scaleX(0.9500);transform-origin:0 0;">0</div>
<div class="r" style="left:612px;top:338px;width:84px;height:40px;background:#3f51b5"></div>
<div class="r" style="left:612px;top:338px;width:65px;height:40px;overflow:hidden">
<div class="t" style="left:31.72px;top:1.00px;font-size:13px;line-height:13px;color:#fff;font-weight:bold;transform:scaleX(0.9500);transform-origin:0 0;">Prd</div>
</div>
<div class="r" style="left:677px;top:339px;width:18px;height:18px;background:#3f51b5;box-shadow:0 2px 2px -1px rgba(0,0,0,.22),0 0 1px rgba(0,0,0,.06)"></div>
<div class="t" style="left:682.96px;top:342.00px;font-size:12px;line-height:12px;color:#fff;font-weight:bold;transform:scaleX(0.9000);transform-origin:0 0;">?</div>
<svg class="r" style="left:688px;top:370px" width="8" height="7" viewBox="0 0 8 7" shape-rendering="crispEdges"><rect x="0" y="6" width="1" height="1" fill="#111"/><rect x="1" y="6" width="1" height="1" fill="#e8e8f0"/><rect x="1" y="5" width="1" height="1" fill="#111"/><rect x="2" y="5" width="1" height="1" fill="#e8e8f0"/><rect x="2" y="4" width="1" height="1" fill="#111"/><rect x="3" y="4" width="1" height="1" fill="#e8e8f0"/><rect x="3" y="3" width="1" height="1" fill="#111"/><rect x="4" y="3" width="1" height="1" fill="#e8e8f0"/><rect x="4" y="2" width="1" height="1" fill="#111"/><rect x="5" y="2" width="1" height="1" fill="#e8e8f0"/><rect x="5" y="1" width="1" height="1" fill="#111"/><rect x="6" y="1" width="1" height="1" fill="#e8e8f0"/><rect x="6" y="0" width="1" height="1" fill="#111"/><rect x="7" y="0" width="1" height="1" fill="#e8e8f0"/><rect x="4" y="6" width="1" height="1" fill="#111"/><rect x="5" y="6" width="1" height="1" fill="#e8e8f0"/><rect x="5" y="5" width="1" height="1" fill="#111"/><rect x="6" y="5" width="1" height="1" fill="#e8e8f0"/><rect x="6" y="4" width="1" height="1" fill="#111"/><rect x="7" y="4" width="1" height="1" fill="#e8e8f0"/></svg>
<div class="r" style="left:612px;top:379px;width:84px;height:24px;background:#3f51b5"></div>
<div class="r" style="left:615px;top:379px;width:78px;height:24px;overflow:hidden">
<div class="t" style="left:1.20px;top:5.50px;font-size:13px;line-height:13px;color:#fff;font-weight:bold;transform:scaleX(0.9500);transform-origin:0 0;">Prd 2.28 Mg/</div>
</div>
<div class="r" style="left:613px;top:428px;width:84px;height:1px;background:#dcdcdc"></div>
<svg class="r" style="left:684.5px;top:412.3px" width="9" height="6" viewBox="0 0 9 6"><path d="M0.9 0.9 L4.5 5.1 L8.1 0.9" fill="none" stroke="#555" stroke-width="1.8"/></svg>
<div class="r" style="left:617px;top:429px;width:74px;height:199px;background:#c0c0c0"></div>
<div class="r" style="left:617px;top:453px;width:74px;height:1px;background:#dadada"></div>
<div class="r" style="left:617px;top:478px;width:74px;height:1px;background:#dadada"></div>
<div class="r" style="left:617px;top:503px;width:74px;height:1px;background:#dadada"></div>
<div class="r" style="left:617px;top:528px;width:74px;height:1px;background:#dadada"></div>
<div class="r" style="left:617px;top:553px;width:74px;height:1px;background:#dadada"></div>
<div class="r" style="left:617px;top:578px;width:74px;height:1px;background:#dadada"></div>
<div class="r" style="left:617px;top:603px;width:74px;height:1px;background:#dadada"></div>
<div class="r" style="left:612px;top:629px;width:84px;height:24px;background:#2e7d32"></div>
<div class="t" style="left:650.57px;top:635.00px;font-size:13px;line-height:13px;color:#fff;font-weight:bold;transform:scaleX(0.9500);transform-origin:0 0;">0</div>
<div class="r" style="left:612px;top:654px;width:84px;height:24px;background:#2e7d32"></div>
<div class="t" style="left:650.57px;top:660.00px;font-size:13px;line-height:13px;color:#fff;font-weight:bold;transform:scaleX(0.9500);transform-origin:0 0;">0</div>
<div class="r" style="left:612px;top:679px;width:84px;height:24px;background:#2e7d32"></div>
<div class="t" style="left:650.57px;top:685.00px;font-size:13px;line-height:13px;color:#fff;font-weight:bold;transform:scaleX(0.9500);transform-origin:0 0;">0</div>
<div class="r" style="left:612px;top:704px;width:84px;height:24px;background:#2e7d32"></div>
<div class="t" style="left:650.57px;top:710.00px;font-size:13px;line-height:13px;color:#fff;font-weight:bold;transform:scaleX(0.9500);transform-origin:0 0;">0</div>
<div class="r" style="left:697px;top:338px;width:84px;height:40px;background:#3f51b5"></div>
<div class="r" style="left:697px;top:338px;width:65px;height:40px;overflow:hidden">
<div class="t" style="left:25.23px;top:1.00px;font-size:13px;line-height:13px;color:#fff;font-weight:bold;transform:scaleX(0.9500);transform-origin:0 0;">WA24</div>
</div>
<div class="r" style="left:762px;top:339px;width:18px;height:18px;background:#3f51b5;box-shadow:0 2px 2px -1px rgba(0,0,0,.22),0 0 1px rgba(0,0,0,.06)"></div>
<div class="t" style="left:767.96px;top:342.00px;font-size:12px;line-height:12px;color:#fff;font-weight:bold;transform:scaleX(0.9000);transform-origin:0 0;">?</div>
<svg class="r" style="left:773px;top:370px" width="8" height="7" viewBox="0 0 8 7" shape-rendering="crispEdges"><rect x="0" y="6" width="1" height="1" fill="#111"/><rect x="1" y="6" width="1" height="1" fill="#e8e8f0"/><rect x="1" y="5" width="1" height="1" fill="#111"/><rect x="2" y="5" width="1" height="1" fill="#e8e8f0"/><rect x="2" y="4" width="1" height="1" fill="#111"/><rect x="3" y="4" width="1" height="1" fill="#e8e8f0"/><rect x="3" y="3" width="1" height="1" fill="#111"/><rect x="4" y="3" width="1" height="1" fill="#e8e8f0"/><rect x="4" y="2" width="1" height="1" fill="#111"/><rect x="5" y="2" width="1" height="1" fill="#e8e8f0"/><rect x="5" y="1" width="1" height="1" fill="#111"/><rect x="6" y="1" width="1" height="1" fill="#e8e8f0"/><rect x="6" y="0" width="1" height="1" fill="#111"/><rect x="7" y="0" width="1" height="1" fill="#e8e8f0"/><rect x="4" y="6" width="1" height="1" fill="#111"/><rect x="5" y="6" width="1" height="1" fill="#e8e8f0"/><rect x="5" y="5" width="1" height="1" fill="#111"/><rect x="6" y="5" width="1" height="1" fill="#e8e8f0"/><rect x="6" y="4" width="1" height="1" fill="#111"/><rect x="7" y="4" width="1" height="1" fill="#e8e8f0"/></svg>
<div class="r" style="left:697px;top:379px;width:84px;height:24px;background:#3f51b5"></div>
<div class="r" style="left:700px;top:379px;width:78px;height:24px;overflow:hidden">
<div class="t" style="left:4.82px;top:5.50px;font-size:13px;line-height:13px;color:#fff;font-weight:bold;transform:scaleX(0.9500);transform-origin:0 0;">WA24 5.0 %</div>
</div>
<div class="r" style="left:698px;top:428px;width:84px;height:1px;background:#dcdcdc"></div>
<svg class="r" style="left:769.5px;top:412.3px" width="9" height="6" viewBox="0 0 9 6"><path d="M0.9 0.9 L4.5 5.1 L8.1 0.9" fill="none" stroke="#555" stroke-width="1.8"/></svg>
<div class="r" style="left:702px;top:429px;width:74px;height:199px;background:#c0c0c0"></div>
<div class="r" style="left:702px;top:453px;width:74px;height:1px;background:#dadada"></div>
<div class="r" style="left:702px;top:478px;width:74px;height:1px;background:#dadada"></div>
<div class="r" style="left:702px;top:503px;width:74px;height:1px;background:#dadada"></div>
<div class="r" style="left:702px;top:528px;width:74px;height:1px;background:#dadada"></div>
<div class="r" style="left:702px;top:553px;width:74px;height:1px;background:#dadada"></div>
<div class="r" style="left:702px;top:578px;width:74px;height:1px;background:#dadada"></div>
<div class="r" style="left:702px;top:603px;width:74px;height:1px;background:#dadada"></div>
<div class="r" style="left:697px;top:629px;width:84px;height:24px;background:#2e7d32"></div>
<div class="t" style="left:735.57px;top:635.00px;font-size:13px;line-height:13px;color:#fff;font-weight:bold;transform:scaleX(0.9500);transform-origin:0 0;">0</div>
<div class="r" style="left:697px;top:654px;width:84px;height:24px;background:#2e7d32"></div>
<div class="t" style="left:735.57px;top:660.00px;font-size:13px;line-height:13px;color:#fff;font-weight:bold;transform:scaleX(0.9500);transform-origin:0 0;">0</div>
<div class="r" style="left:697px;top:679px;width:84px;height:24px;background:#2e7d32"></div>
<div class="t" style="left:735.57px;top:685.00px;font-size:13px;line-height:13px;color:#fff;font-weight:bold;transform:scaleX(0.9500);transform-origin:0 0;">0</div>
<div class="r" style="left:697px;top:704px;width:84px;height:24px;background:#2e7d32"></div>
<div class="t" style="left:735.57px;top:710.00px;font-size:13px;line-height:13px;color:#fff;font-weight:bold;transform:scaleX(0.9500);transform-origin:0 0;">0</div>
<div class="r" style="left:782px;top:338px;width:84px;height:40px;background:#3f51b5"></div>
<div class="r" style="left:782px;top:338px;width:65px;height:40px;overflow:hidden">
<div class="t" style="left:8.69px;top:1.00px;font-size:13px;line-height:13px;color:#fff;font-weight:bold;transform:scaleX(0.9500);transform-origin:0 0;">Alcali-Silicate</div>
</div>
<div class="r" style="left:847px;top:339px;width:18px;height:18px;background:#3f51b5;box-shadow:0 2px 2px -1px rgba(0,0,0,.22),0 0 1px rgba(0,0,0,.06)"></div>
<div class="t" style="left:852.96px;top:342.00px;font-size:12px;line-height:12px;color:#fff;font-weight:bold;transform:scaleX(0.9000);transform-origin:0 0;">?</div>
<svg class="r" style="left:858px;top:370px" width="8" height="7" viewBox="0 0 8 7" shape-rendering="crispEdges"><rect x="0" y="6" width="1" height="1" fill="#111"/><rect x="1" y="6" width="1" height="1" fill="#e8e8f0"/><rect x="1" y="5" width="1" height="1" fill="#111"/><rect x="2" y="5" width="1" height="1" fill="#e8e8f0"/><rect x="2" y="4" width="1" height="1" fill="#111"/><rect x="3" y="4" width="1" height="1" fill="#e8e8f0"/><rect x="3" y="3" width="1" height="1" fill="#111"/><rect x="4" y="3" width="1" height="1" fill="#e8e8f0"/><rect x="4" y="2" width="1" height="1" fill="#111"/><rect x="5" y="2" width="1" height="1" fill="#e8e8f0"/><rect x="5" y="1" width="1" height="1" fill="#111"/><rect x="6" y="1" width="1" height="1" fill="#e8e8f0"/><rect x="6" y="0" width="1" height="1" fill="#111"/><rect x="7" y="0" width="1" height="1" fill="#e8e8f0"/><rect x="4" y="6" width="1" height="1" fill="#111"/><rect x="5" y="6" width="1" height="1" fill="#e8e8f0"/><rect x="5" y="5" width="1" height="1" fill="#111"/><rect x="6" y="5" width="1" height="1" fill="#e8e8f0"/><rect x="6" y="4" width="1" height="1" fill="#111"/><rect x="7" y="4" width="1" height="1" fill="#e8e8f0"/></svg>
<div class="r" style="left:782px;top:379px;width:84px;height:24px;background:#3f51b5"></div>
<div class="r" style="left:785px;top:379px;width:78px;height:24px;overflow:hidden">
<div class="t" style="left:26.09px;top:5.50px;font-size:13px;line-height:13px;color:#fff;font-weight:bold;transform:scaleX(0.9500);transform-origin:0 0;">PRP</div>
</div>
<div class="r" style="left:783px;top:428px;width:84px;height:1px;background:#dcdcdc"></div>
<svg class="r" style="left:854.5px;top:412.3px" width="9" height="6" viewBox="0 0 9 6"><path d="M0.9 0.9 L4.5 5.1 L8.1 0.9" fill="none" stroke="#555" stroke-width="1.8"/></svg>
<div class="r" style="left:787px;top:429px;width:74px;height:199px;background:#c0c0c0"></div>
<div class="r" style="left:787px;top:453px;width:74px;height:1px;background:#dadada"></div>
<div class="r" style="left:787px;top:478px;width:74px;height:1px;background:#dadada"></div>
<div class="r" style="left:787px;top:503px;width:74px;height:1px;background:#dadada"></div>
<div class="r" style="left:787px;top:528px;width:74px;height:1px;background:#dadada"></div>
<div class="r" style="left:787px;top:553px;width:74px;height:1px;background:#dadada"></div>
<div class="r" style="left:787px;top:578px;width:74px;height:1px;background:#dadada"></div>
<div class="r" style="left:787px;top:603px;width:74px;height:1px;background:#dadada"></div>
<div class="r" style="left:782px;top:629px;width:84px;height:24px;background:#2e7d32"></div>
<div class="t" style="left:820.57px;top:635.00px;font-size:13px;line-height:13px;color:#fff;font-weight:bold;transform:scaleX(0.9500);transform-origin:0 0;">0</div>
<div class="r" style="left:782px;top:654px;width:84px;height:24px;background:#2e7d32"></div>
<div class="t" style="left:820.57px;top:660.00px;font-size:13px;line-height:13px;color:#fff;font-weight:bold;transform:scaleX(0.9500);transform-origin:0 0;">0</div>
<div class="r" style="left:782px;top:679px;width:84px;height:24px;background:#2e7d32"></div>
<div class="t" style="left:820.57px;top:685.00px;font-size:13px;line-height:13px;color:#fff;font-weight:bold;transform:scaleX(0.9500);transform-origin:0 0;">0</div>
<div class="r" style="left:782px;top:704px;width:84px;height:24px;background:#2e7d32"></div>
<div class="t" style="left:820.57px;top:710.00px;font-size:13px;line-height:13px;color:#fff;font-weight:bold;transform:scaleX(0.9500);transform-origin:0 0;">0</div>
<div class="r" style="left:867px;top:338px;width:84px;height:40px;background:#3f51b5"></div>
<div class="r" style="left:867px;top:338px;width:65px;height:40px;overflow:hidden">
<div class="t" style="left:22.89px;top:1.00px;font-size:13px;line-height:13px;color:#fff;font-weight:bold;transform:scaleX(0.9500);transform-origin:0 0;">SE(10)</div>
</div>
<div class="r" style="left:932px;top:339px;width:18px;height:18px;background:#3f51b5;box-shadow:0 2px 2px -1px rgba(0,0,0,.22),0 0 1px rgba(0,0,0,.06)"></div>
<div class="t" style="left:937.96px;top:342.00px;font-size:12px;line-height:12px;color:#fff;font-weight:bold;transform:scaleX(0.9000);transform-origin:0 0;">?</div>
<svg class="r" style="left:943px;top:370px" width="8" height="7" viewBox="0 0 8 7" shape-rendering="crispEdges"><rect x="0" y="6" width="1" height="1" fill="#111"/><rect x="1" y="6" width="1" height="1" fill="#e8e8f0"/><rect x="1" y="5" width="1" height="1" fill="#111"/><rect x="2" y="5" width="1" height="1" fill="#e8e8f0"/><rect x="2" y="4" width="1" height="1" fill="#111"/><rect x="3" y="4" width="1" height="1" fill="#e8e8f0"/><rect x="3" y="3" width="1" height="1" fill="#111"/><rect x="4" y="3" width="1" height="1" fill="#e8e8f0"/><rect x="4" y="2" width="1" height="1" fill="#111"/><rect x="5" y="2" width="1" height="1" fill="#e8e8f0"/><rect x="5" y="1" width="1" height="1" fill="#111"/><rect x="6" y="1" width="1" height="1" fill="#e8e8f0"/><rect x="6" y="0" width="1" height="1" fill="#111"/><rect x="7" y="0" width="1" height="1" fill="#e8e8f0"/><rect x="4" y="6" width="1" height="1" fill="#111"/><rect x="5" y="6" width="1" height="1" fill="#e8e8f0"/><rect x="5" y="5" width="1" height="1" fill="#111"/><rect x="6" y="5" width="1" height="1" fill="#e8e8f0"/><rect x="6" y="4" width="1" height="1" fill="#111"/><rect x="7" y="4" width="1" height="1" fill="#e8e8f0"/></svg>
<div class="r" style="left:867px;top:379px;width:84px;height:24px;background:#3f51b5"></div>
<div class="r" style="left:870px;top:379px;width:78px;height:24px;overflow:hidden">
<div class="t" style="left:20.07px;top:5.50px;font-size:13px;line-height:13px;color:#fff;font-weight:bold;transform:scaleX(0.9500);transform-origin:0 0;">SE NR</div>
</div>
<div class="r" style="left:868px;top:428px;width:84px;height:1px;background:#dcdcdc"></div>
<div class="t" style="left:875.84px;top:410.00px;font-size:13px;line-height:13px;color:#555;transform:scaleX(0.9500);transform-origin:0 0;">SE NR</div>
<svg class="r" style="left:939.5px;top:412.3px" width="9" height="6" viewBox="0 0 9 6"><path d="M0.9 0.9 L4.5 5.1 L8.1 0.9" fill="none" stroke="#555" stroke-width="1.8"/></svg>
<div class="r" style="left:872px;top:429px;width:74px;height:199px;background:#c0c0c0"></div>
<div class="r" style="left:872px;top:453px;width:74px;height:1px;background:#dadada"></div>
<div class="r" style="left:872px;top:478px;width:74px;height:1px;background:#dadada"></div>
<div class="r" style="left:872px;top:503px;width:74px;height:1px;background:#dadada"></div>
<div class="r" style="left:872px;top:528px;width:74px;height:1px;background:#dadada"></div>
<div class="r" style="left:872px;top:553px;width:74px;height:1px;background:#dadada"></div>
<div class="r" style="left:872px;top:578px;width:74px;height:1px;background:#dadada"></div>
<div class="r" style="left:872px;top:603px;width:74px;height:1px;background:#dadada"></div>
<div class="r" style="left:867px;top:629px;width:84px;height:24px;background:#2e7d32"></div>
<div class="t" style="left:905.57px;top:635.00px;font-size:13px;line-height:13px;color:#fff;font-weight:bold;transform:scaleX(0.9500);transform-origin:0 0;">0</div>
<div class="r" style="left:867px;top:654px;width:84px;height:24px;background:#2e7d32"></div>
<div class="t" style="left:905.57px;top:660.00px;font-size:13px;line-height:13px;color:#fff;font-weight:bold;transform:scaleX(0.9500);transform-origin:0 0;">0</div>
<div class="r" style="left:867px;top:679px;width:84px;height:24px;background:#2e7d32"></div>
<div class="t" style="left:905.57px;top:685.00px;font-size:13px;line-height:13px;color:#fff;font-weight:bold;transform:scaleX(0.9500);transform-origin:0 0;">0</div>
<div class="r" style="left:867px;top:704px;width:84px;height:24px;background:#2e7d32"></div>
<div class="t" style="left:905.57px;top:710.00px;font-size:13px;line-height:13px;color:#fff;font-weight:bold;transform:scaleX(0.9500);transform-origin:0 0;">0</div>
<div class="r" style="left:952px;top:338px;width:84px;height:40px;background:#3f51b5"></div>
<div class="r" style="left:952px;top:338px;width:65px;height:40px;overflow:hidden">
<div class="t" style="left:36.01px;top:1.00px;font-size:13px;line-height:13px;color:#fff;font-weight:bold;transform:scaleX(0.9500);transform-origin:0 0;">Cl</div>
</div>
<div class="r" style="left:1017px;top:339px;width:18px;height:18px;background:#3f51b5;box-shadow:0 2px 2px -1px rgba(0,0,0,.22),0 0 1px rgba(0,0,0,.06)"></div>
<div class="t" style="left:1022.96px;top:342.00px;font-size:12px;line-height:12px;color:#fff;font-weight:bold;transform:scaleX(0.9000);transform-origin:0 0;">?</div>
<svg class="r" style="left:1028px;top:370px" width="8" height="7" viewBox="0 0 8 7" shape-rendering="crispEdges"><rect x="0" y="6" width="1" height="1" fill="#111"/><rect x="1" y="6" width="1" height="1" fill="#e8e8f0"/><rect x="1" y="5" width="1" height="1" fill="#111"/><rect x="2" y="5" width="1" height="1" fill="#e8e8f0"/><rect x="2" y="4" width="1" height="1" fill="#111"/><rect x="3" y="4" width="1" height="1" fill="#e8e8f0"/><rect x="3" y="3" width="1" height="1" fill="#111"/><rect x="4" y="3" width="1" height="1" fill="#e8e8f0"/><rect x="4" y="2" width="1" height="1" fill="#111"/><rect x="5" y="2" width="1" height="1" fill="#e8e8f0"/><rect x="5" y="1" width="1" height="1" fill="#111"/><rect x="6" y="1" width="1" height="1" fill="#e8e8f0"/><rect x="6" y="0" width="1" height="1" fill="#111"/><rect x="7" y="0" width="1" height="1" fill="#e8e8f0"/><rect x="4" y="6" width="1" height="1" fill="#111"/><rect x="5" y="6" width="1" height="1" fill="#e8e8f0"/><rect x="5" y="5" width="1" height="1" fill="#111"/><rect x="6" y="5" width="1" height="1" fill="#e8e8f0"/><rect x="6" y="4" width="1" height="1" fill="#111"/><rect x="7" y="4" width="1" height="1" fill="#e8e8f0"/></svg>
<div class="r" style="left:952px;top:379px;width:84px;height:24px;background:#3f51b5"></div>
<div class="r" style="left:955px;top:379px;width:78px;height:24px;overflow:hidden">
<div class="t" style="left:8.34px;top:5.50px;font-size:13px;line-height:13px;color:#fff;font-weight:bold;transform:scaleX(0.9500);transform-origin:0 0;">Cl 0.006 %</div>
</div>
<div class="r" style="left:953px;top:428px;width:84px;height:1px;background:#dcdcdc"></div>
<svg class="r" style="left:1024.5px;top:412.3px" width="9" height="6" viewBox="0 0 9 6"><path d="M0.9 0.9 L4.5 5.1 L8.1 0.9" fill="none" stroke="#555" stroke-width="1.8"/></svg>
<div class="r" style="left:957px;top:429px;width:74px;height:199px;background:#c0c0c0"></div>
<div class="r" style="left:957px;top:453px;width:74px;height:1px;background:#dadada"></div>
<div class="r" style="left:957px;top:478px;width:74px;height:1px;background:#dadada"></div>
<div class="r" style="left:957px;top:503px;width:74px;height:1px;background:#dadada"></div>
<div class="r" style="left:957px;top:528px;width:74px;height:1px;background:#dadada"></div>
<div class="r" style="left:957px;top:553px;width:74px;height:1px;background:#dadada"></div>
<div class="r" style="left:957px;top:578px;width:74px;height:1px;background:#dadada"></div>
<div class="r" style="left:957px;top:603px;width:74px;height:1px;background:#dadada"></div>
<div class="r" style="left:952px;top:629px;width:84px;height:24px;background:#2e7d32"></div>
<div class="t" style="left:990.57px;top:635.00px;font-size:13px;line-height:13px;color:#fff;font-weight:bold;transform:scaleX(0.9500);transform-origin:0 0;">0</div>
<div class="r" style="left:952px;top:654px;width:84px;height:24px;background:#2e7d32"></div>
<div class="t" style="left:990.57px;top:660.00px;font-size:13px;line-height:13px;color:#fff;font-weight:bold;transform:scaleX(0.9500);transform-origin:0 0;">0</div>
<div class="r" style="left:952px;top:679px;width:84px;height:24px;background:#2e7d32"></div>
<div class="t" style="left:990.57px;top:685.00px;font-size:13px;line-height:13px;color:#fff;font-weight:bold;transform:scaleX(0.9500);transform-origin:0 0;">0</div>
<div class="r" style="left:952px;top:704px;width:84px;height:24px;background:#2e7d32"></div>
<div class="t" style="left:990.57px;top:710.00px;font-size:13px;line-height:13px;color:#fff;font-weight:bold;transform:scaleX(0.9500);transform-origin:0 0;">0</div>
<div class="r" style="left:1037px;top:338px;width:84px;height:40px;background:#3f51b5"></div>
<div class="r" style="left:1037px;top:338px;width:65px;height:40px;overflow:hidden">
<div class="t" style="left:33.82px;top:1.00px;font-size:13px;line-height:13px;color:#fff;font-weight:bold;transform:scaleX(0.9500);transform-origin:0 0;">Ca</div>
</div>
<div class="r" style="left:1102px;top:339px;width:18px;height:18px;background:#3f51b5;box-shadow:0 2px 2px -1px rgba(0,0,0,.22),0 0 1px rgba(0,0,0,.06)"></div>
<div class="t" style="left:1107.96px;top:342.00px;font-size:12px;line-height:12px;color:#fff;font-weight:bold;transform:scaleX(0.9000);transform-origin:0 0;">?</div>
<svg class="r" style="left:1113px;top:370px" width="8" height="7" viewBox="0 0 8 7" shape-rendering="crispEdges"><rect x="0" y="6" width="1" height="1" fill="#111"/><rect x="1" y="6" width="1" height="1" fill="#e8e8f0"/><rect x="1" y="5" width="1" height="1" fill="#111"/><rect x="2" y="5" width="1" height="1" fill="#e8e8f0"/><rect x="2" y="4" width="1" height="1" fill="#111"/><rect x="3" y="4" width="1" height="1" fill="#e8e8f0"/><rect x="3" y="3" width="1" height="1" fill="#111"/><rect x="4" y="3" width="1" height="1" fill="#e8e8f0"/><rect x="4" y="2" width="1" height="1" fill="#111"/><rect x="5" y="2" width="1" height="1" fill="#e8e8f0"/><rect x="5" y="1" width="1" height="1" fill="#111"/><rect x="6" y="1" width="1" height="1" fill="#e8e8f0"/><rect x="6" y="0" width="1" height="1" fill="#111"/><rect x="7" y="0" width="1" height="1" fill="#e8e8f0"/><rect x="4" y="6" width="1" height="1" fill="#111"/><rect x="5" y="6" width="1" height="1" fill="#e8e8f0"/><rect x="5" y="5" width="1" height="1" fill="#111"/><rect x="6" y="5" width="1" height="1" fill="#e8e8f0"/><rect x="6" y="4" width="1" height="1" fill="#111"/><rect x="7" y="4" width="1" height="1" fill="#e8e8f0"/></svg>
<div class="r" style="left:1037px;top:379px;width:84px;height:24px;background:#3f51b5"></div>
<div class="r" style="left:1040px;top:379px;width:78px;height:24px;overflow:hidden">
<div class="t" style="left:10.07px;top:5.50px;font-size:13px;line-height:13px;color:#fff;font-weight:bold;transform:scaleX(0.9500);transform-origin:0 0;">Ca 0.01 %</div>
</div>
<div class="r" style="left:1038px;top:428px;width:84px;height:1px;background:#dcdcdc"></div>
<svg class="r" style="left:1109.5px;top:412.3px" width="9" height="6" viewBox="0 0 9 6"><path d="M0.9 0.9 L4.5 5.1 L8.1 0.9" fill="none" stroke="#555" stroke-width="1.8"/></svg>
<div class="r" style="left:1042px;top:429px;width:74px;height:199px;background:#c0c0c0"></div>
<div class="r" style="left:1042px;top:453px;width:74px;height:1px;background:#dadada"></div>
<div class="r" style="left:1042px;top:478px;width:74px;height:1px;background:#dadada"></div>
<div class="r" style="left:1042px;top:503px;width:74px;height:1px;background:#dadada"></div>
<div class="r" style="left:1042px;top:528px;width:74px;height:1px;background:#dadada"></div>
<div class="r" style="left:1042px;top:553px;width:74px;height:1px;background:#dadada"></div>
<div class="r" style="left:1042px;top:578px;width:74px;height:1px;background:#dadada"></div>
<div class="r" style="left:1042px;top:603px;width:74px;height:1px;background:#dadada"></div>
<div class="r" style="left:1037px;top:629px;width:84px;height:24px;background:#2e7d32"></div>
<div class="t" style="left:1075.57px;top:635.00px;font-size:13px;line-height:13px;color:#fff;font-weight:bold;transform:scaleX(0.9500);transform-origin:0 0;">0</div>
<div class="r" style="left:1037px;top:654px;width:84px;height:24px;background:#2e7d32"></div>
<div class="t" style="left:1075.57px;top:660.00px;font-size:13px;line-height:13px;color:#fff;font-weight:bold;transform:scaleX(0.9500);transform-origin:0 0;">0</div>
<div class="r" style="left:1037px;top:679px;width:84px;height:24px;background:#2e7d32"></div>
<div class="t" style="left:1075.57px;top:685.00px;font-size:13px;line-height:13px;color:#fff;font-weight:bold;transform:scaleX(0.9500);transform-origin:0 0;">0</div>
<div class="r" style="left:1037px;top:704px;width:84px;height:24px;background:#2e7d32"></div>
<div class="t" style="left:1075.57px;top:710.00px;font-size:13px;line-height:13px;color:#fff;font-weight:bold;transform:scaleX(0.9500);transform-origin:0 0;">0</div>
<div class="r" style="left:1122px;top:338px;width:84px;height:40px;background:#3f51b5"></div>
<div class="r" style="left:1122px;top:338px;width:65px;height:40px;overflow:hidden">
<div class="t" style="left:37.92px;top:1.00px;font-size:13px;line-height:13px;color:#fff;font-weight:bold;transform:scaleX(0.9500);transform-origin:0 0;">S</div>
</div>
<div class="r" style="left:1187px;top:339px;width:18px;height:18px;background:#3f51b5;box-shadow:0 2px 2px -1px rgba(0,0,0,.22),0 0 1px rgba(0,0,0,.06)"></div>
<div class="t" style="left:1192.96px;top:342.00px;font-size:12px;line-height:12px;color:#fff;font-weight:bold;transform:scaleX(0.9000);transform-origin:0 0;">?</div>
<svg class="r" style="left:1198px;top:370px" width="8" height="7" viewBox="0 0 8 7" shape-rendering="crispEdges"><rect x="0" y="6" width="1" height="1" fill="#111"/><rect x="1" y="6" width="1" height="1" fill="#e8e8f0"/><rect x="1" y="5" width="1" height="1" fill="#111"/><rect x="2" y="5" width="1" height="1" fill="#e8e8f0"/><rect x="2" y="4" width="1" height="1" fill="#111"/><rect x="3" y="4" width="1" height="1" fill="#e8e8f0"/><rect x="3" y="3" width="1" height="1" fill="#111"/><rect x="4" y="3" width="1" height="1" fill="#e8e8f0"/><rect x="4" y="2" width="1" height="1" fill="#111"/><rect x="5" y="2" width="1" height="1" fill="#e8e8f0"/><rect x="5" y="1" width="1" height="1" fill="#111"/><rect x="6" y="1" width="1" height="1" fill="#e8e8f0"/><rect x="6" y="0" width="1" height="1" fill="#111"/><rect x="7" y="0" width="1" height="1" fill="#e8e8f0"/><rect x="4" y="6" width="1" height="1" fill="#111"/><rect x="5" y="6" width="1" height="1" fill="#e8e8f0"/><rect x="5" y="5" width="1" height="1" fill="#111"/><rect x="6" y="5" width="1" height="1" fill="#e8e8f0"/><rect x="6" y="4" width="1" height="1" fill="#111"/><rect x="7" y="4" width="1" height="1" fill="#e8e8f0"/></svg>
<div class="r" style="left:1122px;top:379px;width:84px;height:24px;background:#3f51b5"></div>
<div class="r" style="left:1125px;top:379px;width:78px;height:24px;overflow:hidden">
<div class="t" style="left:29.71px;top:5.50px;font-size:13px;line-height:13px;color:#fff;font-weight:bold;transform:scaleX(0.9500);transform-origin:0 0;">S 1</div>
</div>
<div class="r" style="left:1123px;top:428px;width:84px;height:1px;background:#dcdcdc"></div>
<div class="t" style="left:1130.84px;top:410.00px;font-size:13px;line-height:13px;color:#555;transform:scaleX(0.9500);transform-origin:0 0;">S 1</div>
<svg class="r" style="left:1194.5px;top:412.3px" width="9" height="6" viewBox="0 0 9 6"><path d="M0.9 0.9 L4.5 5.1 L8.1 0.9" fill="none" stroke="#555" stroke-width="1.8"/></svg>
<div class="r" style="left:1127px;top:429px;width:74px;height:199px;background:#c0c0c0"></div>
<div class="r" style="left:1127px;top:453px;width:74px;height:1px;background:#dadada"></div>
<div class="r" style="left:1127px;top:478px;width:74px;height:1px;background:#dadada"></div>
<div class="r" style="left:1127px;top:503px;width:74px;height:1px;background:#dadada"></div>
<div class="r" style="left:1127px;top:528px;width:74px;height:1px;background:#dadada"></div>
<div class="r" style="left:1127px;top:553px;width:74px;height:1px;background:#dadada"></div>
<div class="r" style="left:1127px;top:578px;width:74px;height:1px;background:#dadada"></div>
<div class="r" style="left:1127px;top:603px;width:74px;height:1px;background:#dadada"></div>
<div class="t" style="left:1160.20px;top:510.00px;font-size:13px;line-height:13px;color:#686868;">1</div>
<div class="r" style="left:1122px;top:629px;width:84px;height:24px;background:#2e7d32"></div>
<div class="t" style="left:1160.36px;top:635.00px;font-size:13px;line-height:13px;color:#fff;font-weight:bold;transform:scaleX(0.9500);transform-origin:0 0;">1</div>
<div class="r" style="left:1122px;top:654px;width:84px;height:24px;background:#2e7d32"></div>
<div class="t" style="left:1160.36px;top:660.00px;font-size:13px;line-height:13px;color:#fff;font-weight:bold;transform:scaleX(0.9500);transform-origin:0 0;">1</div>
<div class="r" style="left:1122px;top:679px;width:84px;height:24px;background:#2e7d32"></div>
<div class="t" style="left:1160.57px;top:685.00px;font-size:13px;line-height:13px;color:#fff;font-weight:bold;transform:scaleX(0.9500);transform-origin:0 0;">0</div>
<div class="r" style="left:1122px;top:704px;width:84px;height:24px;background:#2e7d32"></div>
<div class="t" style="left:1160.57px;top:710.00px;font-size:13px;line-height:13px;color:#fff;font-weight:bold;transform:scaleX(0.9500);transform-origin:0 0;">0</div>
<div class="r" style="left:1207px;top:338px;width:84px;height:40px;background:#3f51b5"></div>
<div class="r" style="left:1207px;top:338px;width:65px;height:40px;overflow:hidden">
<div class="t" style="left:37.55px;top:1.00px;font-size:13px;line-height:13px;color:#fff;font-weight:bold;transform:scaleX(0.9500);transform-origin:0 0;">A</div>
</div>
<div class="r" style="left:1272px;top:339px;width:18px;height:18px;background:#3f51b5;box-shadow:0 2px 2px -1px rgba(0,0,0,.22),0 0 1px rgba(0,0,0,.06)"></div>
<div class="t" style="left:1277.96px;top:342.00px;font-size:12px;line-height:12px;color:#fff;font-weight:bold;transform:scaleX(0.9000);transform-origin:0 0;">?</div>
<svg class="r" style="left:1283px;top:370px" width="8" height="7" viewBox="0 0 8 7" shape-rendering="crispEdges"><rect x="0" y="6" width="1" height="1" fill="#111"/><rect x="1" y="6" width="1" height="1" fill="#e8e8f0"/><rect x="1" y="5" width="1" height="1" fill="#111"/><rect x="2" y="5" width="1" height="1" fill="#e8e8f0"/><rect x="2" y="4" width="1" height="1" fill="#111"/><rect x="3" y="4" width="1" height="1" fill="#e8e8f0"/><rect x="3" y="3" width="1" height="1" fill="#111"/><rect x="4" y="3" width="1" height="1" fill="#e8e8f0"/><rect x="4" y="2" width="1" height="1" fill="#111"/><rect x="5" y="2" width="1" height="1" fill="#e8e8f0"/><rect x="5" y="1" width="1" height="1" fill="#111"/><rect x="6" y="1" width="1" height="1" fill="#e8e8f0"/><rect x="6" y="0" width="1" height="1" fill="#111"/><rect x="7" y="0" width="1" height="1" fill="#e8e8f0"/><rect x="4" y="6" width="1" height="1" fill="#111"/><rect x="5" y="6" width="1" height="1" fill="#e8e8f0"/><rect x="5" y="5" width="1" height="1" fill="#111"/><rect x="6" y="5" width="1" height="1" fill="#e8e8f0"/><rect x="6" y="4" width="1" height="1" fill="#111"/><rect x="7" y="4" width="1" height="1" fill="#e8e8f0"/></svg>
<div class="r" style="left:1207px;top:379px;width:84px;height:24px;background:#3f51b5"></div>
<div class="r" style="left:1210px;top:379px;width:78px;height:24px;overflow:hidden">
<div class="t" style="left:26.28px;top:5.50px;font-size:13px;line-height:13px;color:#fff;font-weight:bold;transform:scaleX(0.9500);transform-origin:0 0;">A 10</div>
</div>
<div class="r" style="left:1208px;top:428px;width:84px;height:1px;background:#dcdcdc"></div>
<div class="t" style="left:1216.40px;top:410.00px;font-size:13px;line-height:13px;color:#555;transform:scaleX(0.9500);transform-origin:0 0;">A 10</div>
<svg class="r" style="left:1279.5px;top:412.3px" width="9" height="6" viewBox="0 0 9 6"><path d="M0.9 0.9 L4.5 5.1 L8.1 0.9" fill="none" stroke="#555" stroke-width="1.8"/></svg>
<div class="r" style="left:1212px;top:429px;width:74px;height:199px;background:#c0c0c0"></div>
<div class="r" style="left:1212px;top:453px;width:74px;height:1px;background:#dadada"></div>
<div class="r" style="left:1212px;top:478px;width:74px;height:1px;background:#dadada"></div>
<div class="r" style="left:1212px;top:503px;width:74px;height:1px;background:#dadada"></div>
<div class="r" style="left:1212px;top:528px;width:74px;height:1px;background:#dadada"></div>
<div class="r" style="left:1212px;top:553px;width:74px;height:1px;background:#dadada"></div>
<div class="r" style="left:1212px;top:578px;width:74px;height:1px;background:#dadada"></div>
<div class="r" style="left:1212px;top:603px;width:74px;height:1px;background:#dadada"></div>
<div class="t" style="left:1241.53px;top:510.00px;font-size:13px;line-height:13px;color:#686868;">10</div>
<div class="r" style="left:1207px;top:629px;width:84px;height:24px;background:#2e7d32"></div>
<div class="t" style="left:1242.02px;top:635.00px;font-size:13px;line-height:13px;color:#fff;font-weight:bold;transform:scaleX(0.9500);transform-origin:0 0;">10</div>
<div class="r" style="left:1207px;top:654px;width:84px;height:24px;background:#2e7d32"></div>
<div class="t" style="left:1242.02px;top:660.00px;font-size:13px;line-height:13px;color:#fff;font-weight:bold;transform:scaleX(0.9500);transform-origin:0 0;">10</div>
<div class="r" style="left:1207px;top:679px;width:84px;height:24px;background:#2e7d32"></div>
<div class="t" style="left:1245.57px;top:685.00px;font-size:13px;line-height:13px;color:#fff;font-weight:bold;transform:scaleX(0.9500);transform-origin:0 0;">0</div>
<div class="r" style="left:1207px;top:704px;width:84px;height:24px;background:#2e7d32"></div>
<div class="t" style="left:1245.57px;top:710.00px;font-size:13px;line-height:13px;color:#fff;font-weight:bold;transform:scaleX(0.9500);transform-origin:0 0;">0</div>
<div class="r" style="left:1292px;top:338px;width:84px;height:40px;background:#3f51b5"></div>
<div class="r" style="left:1292px;top:338px;width:65px;height:40px;overflow:hidden">
<div class="t" style="left:33.82px;top:1.00px;font-size:13px;line-height:13px;color:#fff;font-weight:bold;transform:scaleX(0.9500);transform-origin:0 0;">SS</div>
</div>
<div class="r" style="left:1357px;top:339px;width:18px;height:18px;background:#3f51b5;box-shadow:0 2px 2px -1px rgba(0,0,0,.22),0 0 1px rgba(0,0,0,.06)"></div>
<div class="t" style="left:1362.96px;top:342.00px;font-size:12px;line-height:12px;color:#fff;font-weight:bold;transform:scaleX(0.9000);transform-origin:0 0;">?</div>
<svg class="r" style="left:1368px;top:370px" width="8" height="7" viewBox="0 0 8 7" shape-rendering="crispEdges"><rect x="0" y="6" width="1" height="1" fill="#111"/><rect x="1" y="6" width="1" height="1" fill="#e8e8f0"/><rect x="1" y="5" width="1" height="1" fill="#111"/><rect x="2" y="5" width="1" height="1" fill="#e8e8f0"/><rect x="2" y="4" width="1" height="1" fill="#111"/><rect x="3" y="4" width="1" height="1" fill="#e8e8f0"/><rect x="3" y="3" width="1" height="1" fill="#111"/><rect x="4" y="3" width="1" height="1" fill="#e8e8f0"/><rect x="4" y="2" width="1" height="1" fill="#111"/><rect x="5" y="2" width="1" height="1" fill="#e8e8f0"/><rect x="5" y="1" width="1" height="1" fill="#111"/><rect x="6" y="1" width="1" height="1" fill="#e8e8f0"/><rect x="6" y="0" width="1" height="1" fill="#111"/><rect x="7" y="0" width="1" height="1" fill="#e8e8f0"/><rect x="4" y="6" width="1" height="1" fill="#111"/><rect x="5" y="6" width="1" height="1" fill="#e8e8f0"/><rect x="5" y="5" width="1" height="1" fill="#111"/><rect x="6" y="5" width="1" height="1" fill="#e8e8f0"/><rect x="6" y="4" width="1" height="1" fill="#111"/><rect x="7" y="4" width="1" height="1" fill="#e8e8f0"/></svg>
<div class="r" style="left:1292px;top:379px;width:84px;height:24px;background:#3f51b5"></div>
<div class="r" style="left:1295px;top:379px;width:78px;height:24px;overflow:hidden">
<div class="t" style="left:1.63px;top:5.50px;font-size:13px;line-height:13px;color:#fff;font-weight:bold;transform:scaleX(0.9500);transform-origin:0 0;">SS 0.1471 %</div>
</div>
<div class="r" style="left:1293px;top:428px;width:84px;height:1px;background:#dcdcdc"></div>
<svg class="r" style="left:1364.5px;top:412.3px" width="9" height="6" viewBox="0 0 9 6"><path d="M0.9 0.9 L4.5 5.1 L8.1 0.9" fill="none" stroke="#555" stroke-width="1.8"/></svg>
<div class="r" style="left:1297px;top:429px;width:74px;height:199px;background:#c0c0c0"></div>
<div class="r" style="left:1297px;top:453px;width:74px;height:1px;background:#dadada"></div>
<div class="r" style="left:1297px;top:478px;width:74px;height:1px;background:#dadada"></div>
<div class="r" style="left:1297px;top:503px;width:74px;height:1px;background:#dadada"></div>
<div class="r" style="left:1297px;top:528px;width:74px;height:1px;background:#dadada"></div>
<div class="r" style="left:1297px;top:553px;width:74px;height:1px;background:#dadada"></div>
<div class="r" style="left:1297px;top:578px;width:74px;height:1px;background:#dadada"></div>
<div class="r" style="left:1297px;top:603px;width:74px;height:1px;background:#dadada"></div>
<div class="r" style="left:1292px;top:629px;width:84px;height:24px;background:#2e7d32"></div>
<div class="t" style="left:1330.57px;top:635.00px;font-size:13px;line-height:13px;color:#fff;font-weight:bold;transform:scaleX(0.9500);transform-origin:0 0;">0</div>
<div class="r" style="left:1292px;top:654px;width:84px;height:24px;background:#2e7d32"></div>
<div class="t" style="left:1330.57px;top:660.00px;font-size:13px;line-height:13px;color:#fff;font-weight:bold;transform:scaleX(0.9500);transform-origin:0 0;">0</div>
<div class="r" style="left:1292px;top:679px;width:84px;height:24px;background:#2e7d32"></div>
<div class="t" style="left:1330.57px;top:685.00px;font-size:13px;line-height:13px;color:#fff;font-weight:bold;transform:scaleX(0.9500);transform-origin:0 0;">0</div>
<div class="r" style="left:1292px;top:704px;width:84px;height:24px;background:#2e7d32"></div>
<div class="t" style="left:1330.57px;top:710.00px;font-size:13px;line-height:13px;color:#fff;font-weight:bold;transform:scaleX(0.9500);transform-origin:0 0;">0</div>
<div class="r" style="left:1377px;top:338px;width:84px;height:40px;background:#3f51b5"></div>
<div class="r" style="left:1377px;top:338px;width:65px;height:40px;overflow:hidden">
<div class="t" style="left:16.96px;top:1.00px;font-size:13px;line-height:13px;color:#fff;font-weight:bold;transform:scaleX(0.9500);transform-origin:0 0;">Na2O eq</div>
</div>
<div class="r" style="left:1442px;top:339px;width:18px;height:18px;background:#3f51b5;box-shadow:0 2px 2px -1px rgba(0,0,0,.22),0 0 1px rgba(0,0,0,.06)"></div>
<div class="t" style="left:1447.96px;top:342.00px;font-size:12px;line-height:12px;color:#fff;font-weight:bold;transform:scaleX(0.9000);transform-origin:0 0;">?</div>
<svg class="r" style="left:1453px;top:370px" width="8" height="7" viewBox="0 0 8 7" shape-rendering="crispEdges"><rect x="0" y="6" width="1" height="1" fill="#111"/><rect x="1" y="6" width="1" height="1" fill="#e8e8f0"/><rect x="1" y="5" width="1" height="1" fill="#111"/><rect x="2" y="5" width="1" height="1" fill="#e8e8f0"/><rect x="2" y="4" width="1" height="1" fill="#111"/><rect x="3" y="4" width="1" height="1" fill="#e8e8f0"/><rect x="3" y="3" width="1" height="1" fill="#111"/><rect x="4" y="3" width="1" height="1" fill="#e8e8f0"/><rect x="4" y="2" width="1" height="1" fill="#111"/><rect x="5" y="2" width="1" height="1" fill="#e8e8f0"/><rect x="5" y="1" width="1" height="1" fill="#111"/><rect x="6" y="1" width="1" height="1" fill="#e8e8f0"/><rect x="6" y="0" width="1" height="1" fill="#111"/><rect x="7" y="0" width="1" height="1" fill="#e8e8f0"/><rect x="4" y="6" width="1" height="1" fill="#111"/><rect x="5" y="6" width="1" height="1" fill="#e8e8f0"/><rect x="5" y="5" width="1" height="1" fill="#111"/><rect x="6" y="5" width="1" height="1" fill="#e8e8f0"/><rect x="6" y="4" width="1" height="1" fill="#111"/><rect x="7" y="4" width="1" height="1" fill="#e8e8f0"/></svg>
<div class="r" style="left:1377px;top:379px;width:84px;height:24px;background:#3f51b5"></div>
<div class="r" style="left:1380px;top:379px;width:78px;height:24px;overflow:hidden">
<div class="t" style="left:12.82px;top:5.50px;font-size:13px;line-height:13px;color:#fff;font-weight:bold;transform:scaleX(0.9500);transform-origin:0 0;">0.0121 %</div>
</div>
<div class="r" style="left:1378px;top:428px;width:84px;height:1px;background:#dcdcdc"></div>
<svg class="r" style="left:1449.5px;top:412.3px" width="9" height="6" viewBox="0 0 9 6"><path d="M0.9 0.9 L4.5 5.1 L8.1 0.9" fill="none" stroke="#555" stroke-width="1.8"/></svg>
<div class="r" style="left:1382px;top:429px;width:74px;height:199px;background:#c0c0c0"></div>
<div class="r" style="left:1382px;top:453px;width:74px;height:1px;background:#dadada"></div>
<div class="r" style="left:1382px;top:478px;width:74px;height:1px;background:#dadada"></div>
<div class="r" style="left:1382px;top:503px;width:74px;height:1px;background:#dadada"></div>
<div class="r" style="left:1382px;top:528px;width:74px;height:1px;background:#dadada"></div>
<div class="r" style="left:1382px;top:553px;width:74px;height:1px;background:#dadada"></div>
<div class="r" style="left:1382px;top:578px;width:74px;height:1px;background:#dadada"></div>
<div class="r" style="left:1382px;top:603px;width:74px;height:1px;background:#dadada"></div>
<div class="r" style="left:1377px;top:629px;width:84px;height:24px;background:#2e7d32"></div>
<div class="t" style="left:1415.57px;top:635.00px;font-size:13px;line-height:13px;color:#fff;font-weight:bold;transform:scaleX(0.9500);transform-origin:0 0;">0</div>
<div class="r" style="left:1377px;top:654px;width:84px;height:24px;background:#2e7d32"></div>
<div class="t" style="left:1415.57px;top:660.00px;font-size:13px;line-height:13px;color:#fff;font-weight:bold;transform:scaleX(0.9500);transform-origin:0 0;">0</div>
<div class="r" style="left:1377px;top:679px;width:84px;height:24px;background:#2e7d32"></div>
<div class="t" style="left:1415.57px;top:685.00px;font-size:13px;line-height:13px;color:#fff;font-weight:bold;transform:scaleX(0.9500);transform-origin:0 0;">0</div>
<div class="r" style="left:1377px;top:704px;width:84px;height:24px;background:#2e7d32"></div>
<div class="t" style="left:1415.57px;top:710.00px;font-size:13px;line-height:13px;color:#fff;font-weight:bold;transform:scaleX(0.9500);transform-origin:0 0;">0</div>
<div class="r" style="left:1462px;top:338px;width:84px;height:40px;background:#3f51b5"></div>
<div class="r" style="left:1462px;top:338px;width:65px;height:40px;overflow:hidden">
<div class="t" style="left:23.63px;top:1.00px;font-size:13px;line-height:13px;color:#fff;font-weight:bold;transform:scaleX(0.9500);transform-origin:0 0;">Ra226</div>
</div>
<div class="r" style="left:1527px;top:339px;width:18px;height:18px;background:#3f51b5;box-shadow:0 2px 2px -1px rgba(0,0,0,.22),0 0 1px rgba(0,0,0,.06)"></div>
<div class="t" style="left:1532.96px;top:342.00px;font-size:12px;line-height:12px;color:#fff;font-weight:bold;transform:scaleX(0.9000);transform-origin:0 0;">?</div>
<svg class="r" style="left:1538px;top:370px" width="8" height="7" viewBox="0 0 8 7" shape-rendering="crispEdges"><rect x="0" y="6" width="1" height="1" fill="#111"/><rect x="1" y="6" width="1" height="1" fill="#e8e8f0"/><rect x="1" y="5" width="1" height="1" fill="#111"/><rect x="2" y="5" width="1" height="1" fill="#e8e8f0"/><rect x="2" y="4" width="1" height="1" fill="#111"/><rect x="3" y="4" width="1" height="1" fill="#e8e8f0"/><rect x="3" y="3" width="1" height="1" fill="#111"/><rect x="4" y="3" width="1" height="1" fill="#e8e8f0"/><rect x="4" y="2" width="1" height="1" fill="#111"/><rect x="5" y="2" width="1" height="1" fill="#e8e8f0"/><rect x="5" y="1" width="1" height="1" fill="#111"/><rect x="6" y="1" width="1" height="1" fill="#e8e8f0"/><rect x="6" y="0" width="1" height="1" fill="#111"/><rect x="7" y="0" width="1" height="1" fill="#e8e8f0"/><rect x="4" y="6" width="1" height="1" fill="#111"/><rect x="5" y="6" width="1" height="1" fill="#e8e8f0"/><rect x="5" y="5" width="1" height="1" fill="#111"/><rect x="6" y="5" width="1" height="1" fill="#e8e8f0"/><rect x="6" y="4" width="1" height="1" fill="#111"/><rect x="7" y="4" width="1" height="1" fill="#e8e8f0"/></svg>
<div class="r" style="left:1462px;top:379px;width:84px;height:24px;background:#3f51b5"></div>
<div class="r" style="left:1465px;top:379px;width:78px;height:24px;overflow:hidden">
<div class="t" style="left:1.20px;top:5.50px;font-size:13px;line-height:13px;color:#fff;font-weight:bold;transform:scaleX(0.9500);transform-origin:0 0;">Ra226 35.0 Bq/kg</div>
</div>
<div class="r" style="left:1463px;top:428px;width:84px;height:1px;background:#dcdcdc"></div>
<svg class="r" style="left:1534.5px;top:412.3px" width="9" height="6" viewBox="0 0 9 6"><path d="M0.9 0.9 L4.5 5.1 L8.1 0.9" fill="none" stroke="#555" stroke-width="1.8"/></svg>
<div class="r" style="left:1467px;top:429px;width:74px;height:199px;background:#c0c0c0"></div>
<div class="r" style="left:1467px;top:453px;width:74px;height:1px;background:#dadada"></div>
<div class="r" style="left:1467px;top:478px;width:74px;height:1px;background:#dadada"></div>
<div class="r" style="left:1467px;top:503px;width:74px;height:1px;background:#dadada"></div>
<div class="r" style="left:1467px;top:528px;width:74px;height:1px;background:#dadada"></div>
<div class="r" style="left:1467px;top:553px;width:74px;height:1px;background:#dadada"></div>
<div class="r" style="left:1467px;top:578px;width:74px;height:1px;background:#dadada"></div>
<div class="r" style="left:1467px;top:603px;width:74px;height:1px;background:#dadada"></div>
<div class="r" style="left:1462px;top:629px;width:84px;height:24px;background:#2e7d32"></div>
<div class="t" style="left:1500.57px;top:635.00px;font-size:13px;line-height:13px;color:#fff;font-weight:bold;transform:scaleX(0.9500);transform-origin:0 0;">0</div>
<div class="r" style="left:1462px;top:654px;width:84px;height:24px;background:#2e7d32"></div>
<div class="t" style="left:1500.57px;top:660.00px;font-size:13px;line-height:13px;color:#fff;font-weight:bold;transform:scaleX(0.9500);transform-origin:0 0;">0</div>
<div class="r" style="left:1462px;top:679px;width:84px;height:24px;background:#2e7d32"></div>
<div class="t" style="left:1500.57px;top:685.00px;font-size:13px;line-height:13px;color:#fff;font-weight:bold;transform:scaleX(0.9500);transform-origin:0 0;">0</div>
<div class="r" style="left:1462px;top:704px;width:84px;height:24px;background:#2e7d32"></div>
<div class="t" style="left:1500.57px;top:710.00px;font-size:13px;line-height:13px;color:#fff;font-weight:bold;transform:scaleX(0.9500);transform-origin:0 0;">0</div>
<div class="r" style="left:1547px;top:338px;width:84px;height:40px;background:#3f51b5"></div>
<div class="r" style="left:1547px;top:338px;width:65px;height:40px;overflow:hidden">
<div class="t" style="left:24.34px;top:1.00px;font-size:13px;line-height:13px;color:#fff;font-weight:bold;transform:scaleX(0.9500);transform-origin:0 0;">Th232</div>
</div>
<div class="r" style="left:1612px;top:339px;width:18px;height:18px;background:#3f51b5;box-shadow:0 2px 2px -1px rgba(0,0,0,.22),0 0 1px rgba(0,0,0,.06)"></div>
<div class="t" style="left:1617.96px;top:342.00px;font-size:12px;line-height:12px;color:#fff;font-weight:bold;transform:scaleX(0.9000);transform-origin:0 0;">?</div>
<svg class="r" style="left:1623px;top:370px" width="8" height="7" viewBox="0 0 8 7" shape-rendering="crispEdges"><rect x="0" y="6" width="1" height="1" fill="#111"/><rect x="1" y="6" width="1" height="1" fill="#e8e8f0"/><rect x="1" y="5" width="1" height="1" fill="#111"/><rect x="2" y="5" width="1" height="1" fill="#e8e8f0"/><rect x="2" y="4" width="1" height="1" fill="#111"/><rect x="3" y="4" width="1" height="1" fill="#e8e8f0"/><rect x="3" y="3" width="1" height="1" fill="#111"/><rect x="4" y="3" width="1" height="1" fill="#e8e8f0"/><rect x="4" y="2" width="1" height="1" fill="#111"/><rect x="5" y="2" width="1" height="1" fill="#e8e8f0"/><rect x="5" y="1" width="1" height="1" fill="#111"/><rect x="6" y="1" width="1" height="1" fill="#e8e8f0"/><rect x="6" y="0" width="1" height="1" fill="#111"/><rect x="7" y="0" width="1" height="1" fill="#e8e8f0"/><rect x="4" y="6" width="1" height="1" fill="#111"/><rect x="5" y="6" width="1" height="1" fill="#e8e8f0"/><rect x="5" y="5" width="1" height="1" fill="#111"/><rect x="6" y="5" width="1" height="1" fill="#e8e8f0"/><rect x="6" y="4" width="1" height="1" fill="#111"/><rect x="7" y="4" width="1" height="1" fill="#e8e8f0"/></svg>
<div class="r" style="left:1547px;top:379px;width:84px;height:24px;background:#3f51b5"></div>
<div class="r" style="left:1550px;top:379px;width:78px;height:24px;overflow:hidden">
<div class="t" style="left:1.88px;top:5.50px;font-size:13px;line-height:13px;color:#fff;font-weight:bold;transform:scaleX(0.9500);transform-origin:0 0;">Th232 35.0 Bq/kg</div>
</div>
<div class="r" style="left:1548px;top:428px;width:84px;height:1px;background:#dcdcdc"></div>
<svg class="r" style="left:1619.5px;top:412.3px" width="9" height="6" viewBox="0 0 9 6"><path d="M0.9 0.9 L4.5 5.1 L8.1 0.9" fill="none" stroke="#555" stroke-width="1.8"/></svg>
<div class="r" style="left:1552px;top:429px;width:74px;height:199px;background:#c0c0c0"></div>
<div class="r" style="left:1552px;top:453px;width:74px;height:1px;background:#dadada"></div>
<div class="r" style="left:1552px;top:478px;width:74px;height:1px;background:#dadada"></div>
<div class="r" style="left:1552px;top:503px;width:74px;height:1px;background:#dadada"></div>
<div class="r" style="left:1552px;top:528px;width:74px;height:1px;background:#dadada"></div>
<div class="r" style="left:1552px;top:553px;width:74px;height:1px;background:#dadada"></div>
<div class="r" style="left:1552px;top:578px;width:74px;height:1px;background:#dadada"></div>
<div class="r" style="left:1552px;top:603px;width:74px;height:1px;background:#dadada"></div>
<div class="r" style="left:1547px;top:629px;width:84px;height:24px;background:#2e7d32"></div>
<div class="r" style="left:1547px;top:654px;width:84px;height:24px;background:#2e7d32"></div>
<div class="r" style="left:1547px;top:679px;width:84px;height:24px;background:#2e7d32"></div>
<div class="r" style="left:1547px;top:704px;width:84px;height:24px;background:#2e7d32"></div>
<div class="r" style="left:1293px;top:428px;width:84px;height:2px;background:#3f51b5"></div>
<div class="r" style="left:1293px;top:429px;width:80px;height:13px;border:2px solid #a2a2a2;border-radius:9px;box-shadow:0 12px 40px 6px rgba(0,0,0,.26),0 4px 8px rgba(0,0,0,.2)"></div>
<div class="r" style="left:102px;top:378px;width:1478px;height:1px;background:#dedede"></div>
</div></body></html>
